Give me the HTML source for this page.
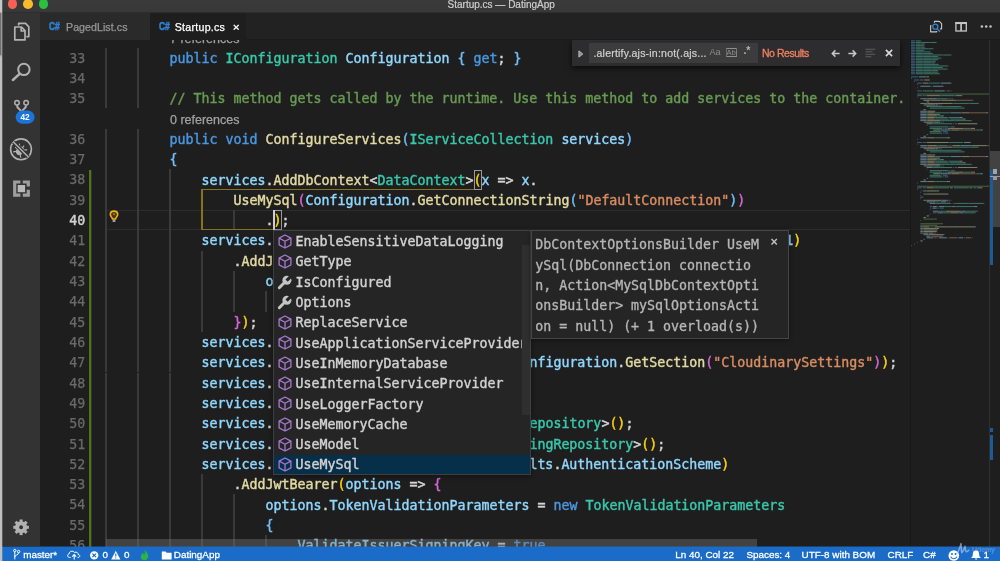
<!DOCTYPE html>
<html lang="en"><head><meta charset="utf-8"><title>Startup.cs — DatingApp</title>
<style>
html,body{margin:0;padding:0;background:#1e1e1e;}
body{width:1000px;height:561px;overflow:hidden;position:relative;font-family:"Liberation Sans","DejaVu Sans",sans-serif;}
*{box-sizing:border-box;}
.abs{position:absolute;}
#root{position:absolute;left:0;top:0;width:1000px;height:561px;overflow:visible;will-change:transform;background:#1e1e1e;filter:blur(0.4px);}
#edge{left:-6px;top:-6px;width:8px;height:573px;background:linear-gradient(#c6c6c6 0,#c6c6c6 18px,#9a9a9a 19px,#9a9a9a 61px,#c0c0c0 63px,#c0c0c0 100%);z-index:5}
#edge2{left:2px;top:-6px;width:1px;height:573px;background:rgba(190,190,190,0.28);z-index:5}
#edge3{left:0;top:13px;width:1px;height:42px;background:#707070;z-index:6}
#title{left:2px;top:-6px;width:1004px;height:19px;background:linear-gradient(#3a3a3a 0,#3a3a3a 6px,#383838 18px,#2d2d2d 18px,#2d2d2d 19px);}
#title .t{position:absolute;left:0;width:1000px;text-align:center;top:5.0px;font-size:10.0px;color:#cfcfcf;letter-spacing:0px;-webkit-text-stroke:0.2px currentColor;white-space:pre;}
.tl{position:absolute;width:9.6px;height:9.6px;border-radius:50%;top:5.4px;}
#act{left:2px;top:13px;width:39px;height:533px;background:linear-gradient(90deg,#333333 0,#333333 38px,#2b2b2b 38px,#2b2b2b 39px);}
#tabs{left:40px;top:13px;width:966px;height:27px;background:linear-gradient(#222223 0,#222223 26px,#1b1b1b 26px,#1b1b1b 27px);}
.tab{position:absolute;top:0;height:26.6px;font-size:10.6px;white-space:pre;}
.tab .ic{position:absolute;top:7.0px;font-size:11.2px;font-weight:bold;color:#2f80d4;letter-spacing:-0.2px;transform:scaleX(0.76);transform-origin:0 0;-webkit-text-stroke:0.55px currentColor;}
.tab .nm{position:absolute;top:8.25px;-webkit-text-stroke:0.25px currentColor;}
#ed{left:40.4px;top:40px;width:966px;height:506.6px;background:#1e1e1e;overflow:hidden;}
.ln,.cl,.num,.lens{position:absolute;white-space:pre;font-family:"DejaVu Sans Mono","Liberation Mono",monospace;font-size:13.29px;line-height:20.3125px;height:20.3125px;}
.cl{color:#d4d4d4;-webkit-text-stroke:0.42px currentColor;}
.num{color:#6a6a6a;-webkit-text-stroke:0.25px currentColor;width:40px;text-align:right;}
.lens{font-family:"Liberation Sans",sans-serif;font-size:12.5px;letter-spacing:0px;color:#a2a2a2;-webkit-text-stroke:0.25px currentColor;}
.k{color:#4a97e0}.t{color:#38c8ad}.c{color:#679b52}.f{color:#e3daa2}.v{color:#90d7fe}.s{color:#d88c62}.p{color:#d6d6d6}
.b1{color:#fdd10c}.b2{color:#d268d6}.b3{color:#72bef8}
.sg{color:#d2d2d2;-webkit-text-stroke:0.4px currentColor}.dt{color:#b6b6b6;-webkit-text-stroke:0.32px currentColor}.ui{white-space:pre;font-family:"Liberation Sans",sans-serif}
.g{position:absolute;width:1.15px;background:#3a3a3a;}
#status{left:2px;top:546px;width:1004px;height:21px;background:linear-gradient(rgba(27,108,200,0.45) 0,rgba(27,108,200,0.45) 1px,#1b6cc8 1px,#1b6cc8 100%);color:#fff;font-size:9.9px;white-space:pre;}
#status span{position:absolute;top:3.3px;line-height:12px;-webkit-text-stroke:0.28px currentColor;}
</style></head><body>
<div id="root">

<div id="edge" class="abs"></div><div id="edge2" class="abs"></div><div id="edge3" class="abs"></div>
<div id="title" class="abs"><div class="tl" style="left:5.7px;background:#f95f57"></div><div class="tl" style="left:21.3px;background:#fbb92e"></div><div class="tl" style="left:36.9px;background:#29c13f"></div><div class="t" style="left:-0.8px">Startup.cs — DatingApp</div></div>
<div id="act" class="abs"><svg class="abs" style="left:0;top:0" width="39" height="534" viewBox="2.0 13.0 39 534"><g fill="none" stroke="#b2b2b2" stroke-width="1.7" stroke-linejoin="round"><path d="M18.6 25.4 L18.6 23.4 L25.6 23.4 L28.8 26.8 L28.8 36.6 L26.4 36.6"/><path d="M14.8 27 L21.6 27 L25 30.6 L25 39.9 L14.8 39.9 Z"/><path d="M21.2 27.2 L21.2 31 L24.8 31"/></g><circle cx="23.9" cy="69.4" r="5.7" fill="none" stroke="#b2b2b2" stroke-width="2"/><path d="M19.6 73.9 L12.9 80" stroke="#b2b2b2" stroke-width="2.5" stroke-linecap="round"/><g fill="none" stroke="#b2b2b2"><circle cx="17" cy="102.8" r="2.25" stroke-width="1.5"/><circle cx="26.1" cy="102.8" r="2.25" stroke-width="1.5"/><path d="M17 105.2 C17 109.2 20.4 108.2 20.7 111.4 M26.1 105.2 C26.1 109.2 22.7 108.2 22.4 111.4" stroke-width="2"/></g><rect x="15.7" y="110.5" width="18.8" height="13.3" rx="6.65" fill="#1a74da"/><text x="25.1" y="120.1" font-family="Liberation Sans, sans-serif" font-size="8.3" font-weight="bold" fill="#fff" text-anchor="middle">42</text><g fill="none" stroke="#b2b2b2" stroke-width="1.6"><circle cx="21" cy="149.3" r="10.4"/></g><g transform="translate(21 149.6) rotate(38)" stroke="#b2b2b2" stroke-width="1.15" fill="none"><ellipse cx="0" cy="1.6" rx="3.1" ry="4" fill="#b2b2b2"/><path d="M0 -2.6 L0 -5 M-2.4 -1.2 L-5 -3.6 M2.4 -1.2 L5 -3.6 M-3 1.6 L-6.2 1.6 M3 1.6 L6.2 1.6 M-2.4 4.2 L-4.8 6.6 M2.4 4.2 L4.8 6.6"/></g><path d="M13.6 142.2 L28.2 156.8" stroke="#333" stroke-width="4"/><path d="M13.4 142 L28.4 157" stroke="#b2b2b2" stroke-width="1.5"/><g fill="none" stroke="#9e9e9e" stroke-width="3.2"><path d="M20.4 182 L14.7 182 L14.7 195.1 L20.4 195.1"/><path d="M22.8 182 L28.3 182 L28.3 186.4"/><path d="M28.3 189.8 L28.3 195.1 L22.8 195.1"/></g><rect x="17.7" y="185" width="7.4" height="7.2" fill="#b9b9b9"/><g transform="translate(21.1 527.3)"><circle r="4.0" fill="none" stroke="#b2b2b2" stroke-width="4.1"/><rect x="-1.5" y="-7.8" width="3" height="3" fill="#b2b2b2" transform="rotate(0)"/><rect x="-1.5" y="-7.8" width="3" height="3" fill="#b2b2b2" transform="rotate(45)"/><rect x="-1.5" y="-7.8" width="3" height="3" fill="#b2b2b2" transform="rotate(90)"/><rect x="-1.5" y="-7.8" width="3" height="3" fill="#b2b2b2" transform="rotate(135)"/><rect x="-1.5" y="-7.8" width="3" height="3" fill="#b2b2b2" transform="rotate(180)"/><rect x="-1.5" y="-7.8" width="3" height="3" fill="#b2b2b2" transform="rotate(225)"/><rect x="-1.5" y="-7.8" width="3" height="3" fill="#b2b2b2" transform="rotate(270)"/><rect x="-1.5" y="-7.8" width="3" height="3" fill="#b2b2b2" transform="rotate(315)"/></g></svg></div>
<div id="tabs" class="abs">
<div class="tab" style="left:0;width:110px;background:#2a2a2a;color:#969696"><span class="ic" style="left:9.0px">C#</span><span class="nm" style="left:26.0px;letter-spacing:0.07px">PagedList.cs</span></div>
<div class="tab" style="left:110px;width:96px;height:27px;background:#1e1e1e;color:#fff"><span class="ic" style="left:8.7px">C#</span><span class="nm" style="left:24.7px;letter-spacing:0.28px">Startup.cs</span><span class="nm" style="left:82.7px;top:7.2px;font-size:11.8px;font-weight:bold;-webkit-text-stroke:0">×</span></div>
<svg class="abs" style="left:0;top:0" width="960" height="27" viewBox="40.0 13.0 960 27"><g fill="none" stroke="#c5c5c5" stroke-width="1.15" stroke-linejoin="round"><path d="M931.4 25.6 L930.6 25.6 L930.6 31.8 L936.6 31.8 L936.6 31"/><path d="M934.4 22.8 L934.4 21.4 L939.4 21.4 L941.6 23.6 L941.6 28.8 L940 28.8"/></g><circle cx="935.3" cy="26.7" r="2.5" fill="none" stroke="#3d82c8" stroke-width="1.3"/><path d="M937.1 28.7 L940 31.8" stroke="#3d82c8" stroke-width="1.4"/><rect x="955.9" y="22.7" width="10.4" height="8.3" fill="none" stroke="#c5c5c5" stroke-width="1.3"/><path d="M955.3 23.1 H966.9" stroke="#c5c5c5" stroke-width="1.9"/><path d="M961.1 22.7 V31" stroke="#c5c5c5" stroke-width="1.7"/><circle cx="981.9" cy="26.4" r="1.25" fill="#c5c5c5"/><circle cx="986.2" cy="26.4" r="1.25" fill="#c5c5c5"/><circle cx="990.5" cy="26.4" r="1.25" fill="#c5c5c5"/></svg>
</div>
<div id="ed" class="abs">
<div class="abs" style="left:65.60px;top:170.10px;width:804.00px;height:20.31px;border-top:1.5px solid #2c2c2c;border-bottom:1.5px solid #2c2c2c"></div>
<div class="abs" style="left:48.60px;top:129.80px;width:3px;height:400px;background:linear-gradient(90deg,#51721f 0,#51721f 2px,#2c3c15 2px,#2c3c15 3px)"></div>
<div class="lens" style="left:129.60px;top:-11.11px">7 references</div>
<div class="g" style="left:65.05px;top:7.50px;height:20.31px"></div>
<div class="g" style="left:97.05px;top:7.50px;height:20.31px"></div>
<div class="num" style="left:4.80px;top:8.60px">33</div>
<div class="cl" style="left:129.15px;top:8.65px"><span class="k">public</span> <span class="t">IConfiguration</span> <span class="v">Configuration</span> <span class="b3">{</span> <span class="k">get</span><span class="p">;</span> <span class="b3">}</span></div>
<div class="g" style="left:65.05px;top:27.81px;height:20.31px"></div>
<div class="g" style="left:97.05px;top:27.81px;height:20.31px"></div>
<div class="num" style="left:4.80px;top:28.91px">34</div>
<div class="g" style="left:65.05px;top:48.12px;height:20.31px"></div>
<div class="g" style="left:97.05px;top:48.12px;height:20.31px"></div>
<div class="num" style="left:4.80px;top:49.22px">35</div>
<div class="cl" style="left:129.15px;top:49.28px"><span class="c">// This method gets called by the runtime. Use this method to add services to the container.</span></div>
<div class="lens" style="left:129.60px;top:70.14px">0 references</div>
<div class="g" style="left:65.05px;top:88.75px;height:20.31px"></div>
<div class="g" style="left:97.05px;top:88.75px;height:20.31px"></div>
<div class="num" style="left:4.80px;top:89.85px">36</div>
<div class="cl" style="left:129.15px;top:89.90px"><span class="k">public</span> <span class="k">void</span> <span class="f">ConfigureServices</span><span class="b3">(</span><span class="t">IServiceCollection</span> <span class="v">services</span><span class="b3">)</span></div>
<div class="g" style="left:65.05px;top:109.06px;height:20.31px"></div>
<div class="g" style="left:97.05px;top:109.06px;height:20.31px"></div>
<div class="num" style="left:4.80px;top:110.16px">37</div>
<div class="cl" style="left:129.15px;top:110.21px"><span class="b3">{</span></div>
<div class="g" style="left:65.05px;top:129.38px;height:20.31px"></div>
<div class="g" style="left:97.05px;top:129.38px;height:20.31px"></div>
<div class="g" style="left:129.05px;top:129.38px;height:20.31px"></div>
<div class="num" style="left:4.80px;top:130.47px">38</div>
<div class="cl" style="left:161.15px;top:130.53px"><span class="v">services</span><span class="p">.</span><span class="f">AddDbContext</span><span class="p">&lt;</span><span class="t">DataContext</span><span class="p">&gt;</span><span class="b1">(</span><span class="v">x</span><span class="p"> =&gt; </span><span class="v">x</span><span class="p">.</span></div>
<div class="g" style="left:65.05px;top:149.69px;height:20.31px"></div>
<div class="g" style="left:97.05px;top:149.69px;height:20.31px"></div>
<div class="g" style="left:129.05px;top:149.69px;height:20.31px"></div>
<div class="g" style="left:161.05px;top:149.69px;height:20.31px"></div>
<div class="num" style="left:4.80px;top:150.79px">39</div>
<div class="cl" style="left:193.15px;top:150.84px"><span class="f">UseMySql</span><span class="b2">(</span><span class="v">Configuration</span><span class="p">.</span><span class="f">GetConnectionString</span><span class="b3">(</span><span class="s">"DefaultConnection"</span><span class="b3">)</span><span class="b2">)</span></div>
<div class="g" style="left:65.05px;top:170.00px;height:20.31px"></div>
<div class="g" style="left:97.05px;top:170.00px;height:20.31px"></div>
<div class="g" style="left:129.05px;top:170.00px;height:20.31px"></div>
<div class="g" style="left:161.05px;top:170.00px;height:20.31px"></div>
<div class="g" style="left:193.05px;top:170.00px;height:20.31px"></div>
<div class="num" style="left:4.80px;top:171.10px;color:#cfcfcf;-webkit-text-stroke:0.45px currentColor">40</div>
<div class="cl" style="left:225.15px;top:171.15px"><span class="p">.</span><span class="b1">)</span><span class="p">;</span></div>
<div class="g" style="left:65.05px;top:190.31px;height:20.31px"></div>
<div class="g" style="left:97.05px;top:190.31px;height:20.31px"></div>
<div class="g" style="left:129.05px;top:190.31px;height:20.31px"></div>
<div class="num" style="left:4.80px;top:191.41px">41</div>
<div class="cl" style="left:161.15px;top:191.46px"><span class="v">services</span><span class="p">.</span><span class="f">AddMvc</span><span class="b1">()</span><span class="p">.</span><span class="f">SetCompatibilityVersion</span><span class="b1">(</span><span class="t">CompatibilityVersion</span><span class="p">.</span><span class="v">Version_2_1</span><span class="b1">)</span></div>
<div class="g" style="left:65.05px;top:210.62px;height:20.31px"></div>
<div class="g" style="left:97.05px;top:210.62px;height:20.31px"></div>
<div class="g" style="left:129.05px;top:210.62px;height:20.31px"></div>
<div class="g" style="left:161.05px;top:210.62px;height:20.31px"></div>
<div class="num" style="left:4.80px;top:211.72px">42</div>
<div class="cl" style="left:193.15px;top:211.78px"><span class="p">.</span><span class="f">AddJsonOptions</span><span class="b1">(</span><span class="v">opt</span><span class="p"> =&gt; </span><span class="b2">{</span></div>
<div class="g" style="left:65.05px;top:230.94px;height:20.31px"></div>
<div class="g" style="left:97.05px;top:230.94px;height:20.31px"></div>
<div class="g" style="left:129.05px;top:230.94px;height:20.31px"></div>
<div class="g" style="left:161.05px;top:230.94px;height:20.31px"></div>
<div class="g" style="left:193.05px;top:230.94px;height:20.31px"></div>
<div class="num" style="left:4.80px;top:232.04px">43</div>
<div class="cl" style="left:225.15px;top:232.09px"><span class="v">opt</span><span class="p">.</span><span class="v">SerializerSettings</span><span class="p">.</span><span class="v">ReferenceLoopHandling</span><span class="p"> =</span></div>
<div class="g" style="left:65.05px;top:251.25px;height:20.31px"></div>
<div class="g" style="left:97.05px;top:251.25px;height:20.31px"></div>
<div class="g" style="left:129.05px;top:251.25px;height:20.31px"></div>
<div class="g" style="left:161.05px;top:251.25px;height:20.31px"></div>
<div class="g" style="left:193.05px;top:251.25px;height:20.31px"></div>
<div class="g" style="left:225.05px;top:251.25px;height:20.31px"></div>
<div class="num" style="left:4.80px;top:252.35px">44</div>
<div class="cl" style="left:257.15px;top:252.40px"><span class="v">Newtonsoft</span><span class="p">.</span><span class="v">Json</span><span class="p">.</span><span class="t">ReferenceLoopHandling</span><span class="p">.</span><span class="v">Ignore</span><span class="p">;</span></div>
<div class="g" style="left:65.05px;top:271.56px;height:20.31px"></div>
<div class="g" style="left:97.05px;top:271.56px;height:20.31px"></div>
<div class="g" style="left:129.05px;top:271.56px;height:20.31px"></div>
<div class="g" style="left:161.05px;top:271.56px;height:20.31px"></div>
<div class="num" style="left:4.80px;top:272.66px">45</div>
<div class="cl" style="left:193.15px;top:272.71px"><span class="b2">}</span><span class="b1">)</span><span class="p">;</span></div>
<div class="g" style="left:65.05px;top:291.88px;height:20.31px"></div>
<div class="g" style="left:97.05px;top:291.88px;height:20.31px"></div>
<div class="g" style="left:129.05px;top:291.88px;height:20.31px"></div>
<div class="num" style="left:4.80px;top:292.98px">46</div>
<div class="cl" style="left:161.15px;top:293.02px"><span class="v">services</span><span class="p">.</span><span class="f">AddCors</span><span class="b1">()</span><span class="p">;</span></div>
<div class="g" style="left:65.05px;top:312.19px;height:20.31px"></div>
<div class="g" style="left:97.05px;top:312.19px;height:20.31px"></div>
<div class="g" style="left:129.05px;top:312.19px;height:20.31px"></div>
<div class="num" style="left:4.80px;top:313.29px">47</div>
<div class="cl" style="left:161.15px;top:313.34px"><span class="v">services</span><span class="p">.</span><span class="f">Configure</span><span class="p">&lt;</span><span class="t">CloudinarySettings</span><span class="p">&gt;</span><span class="b1">(</span><span class="v">Configuration</span><span class="p">.</span><span class="f">GetSection</span><span class="b2">(</span><span class="s">"CloudinarySettings"</span><span class="b2">)</span><span class="b1">)</span><span class="p">;</span></div>
<div class="g" style="left:65.05px;top:332.50px;height:20.31px"></div>
<div class="g" style="left:97.05px;top:332.50px;height:20.31px"></div>
<div class="g" style="left:129.05px;top:332.50px;height:20.31px"></div>
<div class="num" style="left:4.80px;top:333.60px">48</div>
<div class="cl" style="left:161.15px;top:333.65px"><span class="v">services</span><span class="p">.</span><span class="f">AddAutoMapper</span><span class="b1">()</span><span class="p">;</span></div>
<div class="g" style="left:65.05px;top:352.81px;height:20.31px"></div>
<div class="g" style="left:97.05px;top:352.81px;height:20.31px"></div>
<div class="g" style="left:129.05px;top:352.81px;height:20.31px"></div>
<div class="num" style="left:4.80px;top:353.91px">49</div>
<div class="cl" style="left:161.15px;top:353.96px"><span class="v">services</span><span class="p">.</span><span class="f">AddTransient</span><span class="p">&lt;</span><span class="t">Seed</span><span class="p">&gt;</span><span class="b1">()</span><span class="p">;</span></div>
<div class="g" style="left:65.05px;top:373.12px;height:20.31px"></div>
<div class="g" style="left:97.05px;top:373.12px;height:20.31px"></div>
<div class="g" style="left:129.05px;top:373.12px;height:20.31px"></div>
<div class="num" style="left:4.80px;top:374.23px">50</div>
<div class="cl" style="left:161.15px;top:374.27px"><span class="v">services</span><span class="p">.</span><span class="f">AddScoped</span><span class="p">&lt;</span><span class="t">IAuthRepository</span><span class="p">, </span><span class="t">AuthRepository</span><span class="p">&gt;</span><span class="b1">()</span><span class="p">;</span></div>
<div class="g" style="left:65.05px;top:393.44px;height:20.31px"></div>
<div class="g" style="left:97.05px;top:393.44px;height:20.31px"></div>
<div class="g" style="left:129.05px;top:393.44px;height:20.31px"></div>
<div class="num" style="left:4.80px;top:394.54px">51</div>
<div class="cl" style="left:161.15px;top:394.59px"><span class="v">services</span><span class="p">.</span><span class="f">AddScoped</span><span class="p">&lt;</span><span class="t">IDatingRepository</span><span class="p">, </span><span class="t">DatingRepository</span><span class="p">&gt;</span><span class="b1">()</span><span class="p">;</span></div>
<div class="g" style="left:65.05px;top:413.75px;height:20.31px"></div>
<div class="g" style="left:97.05px;top:413.75px;height:20.31px"></div>
<div class="g" style="left:129.05px;top:413.75px;height:20.31px"></div>
<div class="num" style="left:4.80px;top:414.85px">52</div>
<div class="cl" style="left:161.15px;top:414.90px"><span class="v">services</span><span class="p">.</span><span class="f">AddAuthentication</span><span class="b1">(</span><span class="v">JwtBearerDefaults</span><span class="p">.</span><span class="v">AuthenticationScheme</span><span class="b1">)</span></div>
<div class="g" style="left:65.05px;top:434.06px;height:20.31px"></div>
<div class="g" style="left:97.05px;top:434.06px;height:20.31px"></div>
<div class="g" style="left:129.05px;top:434.06px;height:20.31px"></div>
<div class="g" style="left:161.05px;top:434.06px;height:20.31px"></div>
<div class="num" style="left:4.80px;top:435.16px">53</div>
<div class="cl" style="left:193.15px;top:435.21px"><span class="p">.</span><span class="f">AddJwtBearer</span><span class="b1">(</span><span class="v">options</span><span class="p"> =&gt; </span><span class="b2">{</span></div>
<div class="g" style="left:65.05px;top:454.38px;height:20.31px"></div>
<div class="g" style="left:97.05px;top:454.38px;height:20.31px"></div>
<div class="g" style="left:129.05px;top:454.38px;height:20.31px"></div>
<div class="g" style="left:161.05px;top:454.38px;height:20.31px"></div>
<div class="g" style="left:193.05px;top:454.38px;height:20.31px"></div>
<div class="num" style="left:4.80px;top:455.48px">54</div>
<div class="cl" style="left:225.15px;top:455.52px"><span class="v">options</span><span class="p">.</span><span class="v">TokenValidationParameters</span><span class="p"> = </span><span class="k">new</span> <span class="t">TokenValidationParameters</span></div>
<div class="g" style="left:65.05px;top:474.69px;height:20.31px"></div>
<div class="g" style="left:97.05px;top:474.69px;height:20.31px"></div>
<div class="g" style="left:129.05px;top:474.69px;height:20.31px"></div>
<div class="g" style="left:161.05px;top:474.69px;height:20.31px"></div>
<div class="g" style="left:193.05px;top:474.69px;height:20.31px"></div>
<div class="num" style="left:4.80px;top:475.79px">55</div>
<div class="cl" style="left:225.15px;top:475.84px"><span class="b3">{</span></div>
<div class="g" style="left:65.05px;top:495.00px;height:20.31px"></div>
<div class="g" style="left:97.05px;top:495.00px;height:20.31px"></div>
<div class="g" style="left:129.05px;top:495.00px;height:20.31px"></div>
<div class="g" style="left:161.05px;top:495.00px;height:20.31px"></div>
<div class="g" style="left:193.05px;top:495.00px;height:20.31px"></div>
<div class="g" style="left:225.05px;top:495.00px;height:20.31px"></div>
<div class="num" style="left:4.80px;top:496.10px">56</div>
<div class="cl" style="left:257.15px;top:496.15px"><span class="v">ValidateIssuerSigningKey</span><span class="p"> = </span><span class="k">true</span><span class="p">,</span></div>
<svg class="abs" style="left:870.20px;top:0" width="78.60" height="340" viewBox="0 0 78.60 340" shape-rendering="auto"><rect x="0.00" y="0.40" width="3.90" height="1.05" fill="#569cd6" opacity="0.50"/><rect x="4.68" y="0.40" width="4.68" height="1.05" fill="#4ec9b0" opacity="0.50"/><rect x="9.36" y="0.40" width="0.78" height="1.05" fill="#d4d4d4" opacity="0.30"/><rect x="0.00" y="1.96" width="3.90" height="1.05" fill="#569cd6" opacity="0.50"/><rect x="4.68" y="1.96" width="4.68" height="1.05" fill="#4ec9b0" opacity="0.50"/><rect x="9.36" y="1.96" width="0.78" height="1.05" fill="#d4d4d4" opacity="0.30"/><rect x="10.14" y="1.96" width="8.58" height="1.05" fill="#4ec9b0" opacity="0.50"/><rect x="18.72" y="1.96" width="0.78" height="1.05" fill="#d4d4d4" opacity="0.30"/><rect x="19.50" y="1.96" width="5.46" height="1.05" fill="#4ec9b0" opacity="0.50"/><rect x="24.96" y="1.96" width="0.78" height="1.05" fill="#d4d4d4" opacity="0.30"/><rect x="0.00" y="3.52" width="3.90" height="1.05" fill="#569cd6" opacity="0.50"/><rect x="4.68" y="3.52" width="4.68" height="1.05" fill="#4ec9b0" opacity="0.50"/><rect x="9.36" y="3.52" width="0.78" height="1.05" fill="#d4d4d4" opacity="0.30"/><rect x="10.14" y="3.52" width="3.12" height="1.05" fill="#4ec9b0" opacity="0.50"/><rect x="13.26" y="3.52" width="0.78" height="1.05" fill="#d4d4d4" opacity="0.30"/><rect x="0.00" y="5.09" width="3.90" height="1.05" fill="#569cd6" opacity="0.50"/><rect x="4.68" y="5.09" width="4.68" height="1.05" fill="#4ec9b0" opacity="0.50"/><rect x="9.36" y="5.09" width="0.78" height="1.05" fill="#d4d4d4" opacity="0.30"/><rect x="10.14" y="5.09" width="2.34" height="1.05" fill="#4ec9b0" opacity="0.50"/><rect x="12.48" y="5.09" width="0.78" height="1.05" fill="#d4d4d4" opacity="0.30"/><rect x="0.00" y="6.65" width="3.90" height="1.05" fill="#569cd6" opacity="0.50"/><rect x="4.68" y="6.65" width="4.68" height="1.05" fill="#4ec9b0" opacity="0.50"/><rect x="9.36" y="6.65" width="0.78" height="1.05" fill="#d4d4d4" opacity="0.30"/><rect x="10.14" y="6.65" width="3.12" height="1.05" fill="#4ec9b0" opacity="0.50"/><rect x="13.26" y="6.65" width="0.78" height="1.05" fill="#d4d4d4" opacity="0.30"/><rect x="0.00" y="8.21" width="3.90" height="1.05" fill="#569cd6" opacity="0.50"/><rect x="4.68" y="8.21" width="4.68" height="1.05" fill="#4ec9b0" opacity="0.50"/><rect x="9.36" y="8.21" width="0.78" height="1.05" fill="#d4d4d4" opacity="0.30"/><rect x="10.14" y="8.21" width="7.02" height="1.05" fill="#4ec9b0" opacity="0.50"/><rect x="17.16" y="8.21" width="0.78" height="1.05" fill="#d4d4d4" opacity="0.30"/><rect x="17.94" y="8.21" width="3.90" height="1.05" fill="#4ec9b0" opacity="0.50"/><rect x="21.84" y="8.21" width="0.78" height="1.05" fill="#d4d4d4" opacity="0.30"/><rect x="0.00" y="9.77" width="3.90" height="1.05" fill="#569cd6" opacity="0.50"/><rect x="4.68" y="9.77" width="7.80" height="1.05" fill="#4ec9b0" opacity="0.50"/><rect x="12.48" y="9.77" width="0.78" height="1.05" fill="#d4d4d4" opacity="0.30"/><rect x="0.00" y="11.34" width="3.90" height="1.05" fill="#569cd6" opacity="0.50"/><rect x="4.68" y="11.34" width="7.02" height="1.05" fill="#4ec9b0" opacity="0.50"/><rect x="11.70" y="11.34" width="0.78" height="1.05" fill="#d4d4d4" opacity="0.30"/><rect x="12.48" y="11.34" width="2.34" height="1.05" fill="#4ec9b0" opacity="0.50"/><rect x="14.82" y="11.34" width="0.78" height="1.05" fill="#d4d4d4" opacity="0.30"/><rect x="15.60" y="11.34" width="3.12" height="1.05" fill="#4ec9b0" opacity="0.50"/><rect x="18.72" y="11.34" width="0.78" height="1.05" fill="#d4d4d4" opacity="0.30"/><rect x="0.00" y="12.90" width="3.90" height="1.05" fill="#569cd6" opacity="0.50"/><rect x="4.68" y="12.90" width="7.02" height="1.05" fill="#4ec9b0" opacity="0.50"/><rect x="11.70" y="12.90" width="0.78" height="1.05" fill="#d4d4d4" opacity="0.30"/><rect x="12.48" y="12.90" width="2.34" height="1.05" fill="#4ec9b0" opacity="0.50"/><rect x="14.82" y="12.90" width="0.78" height="1.05" fill="#d4d4d4" opacity="0.30"/><rect x="15.60" y="12.90" width="5.46" height="1.05" fill="#4ec9b0" opacity="0.50"/><rect x="21.06" y="12.90" width="0.78" height="1.05" fill="#d4d4d4" opacity="0.30"/><rect x="0.00" y="14.46" width="3.90" height="1.05" fill="#569cd6" opacity="0.50"/><rect x="4.68" y="14.46" width="7.02" height="1.05" fill="#4ec9b0" opacity="0.50"/><rect x="11.70" y="14.46" width="0.78" height="1.05" fill="#d4d4d4" opacity="0.30"/><rect x="12.48" y="14.46" width="7.80" height="1.05" fill="#4ec9b0" opacity="0.50"/><rect x="20.28" y="14.46" width="0.78" height="1.05" fill="#d4d4d4" opacity="0.30"/><rect x="21.06" y="14.46" width="10.92" height="1.05" fill="#4ec9b0" opacity="0.50"/><rect x="31.98" y="14.46" width="0.78" height="1.05" fill="#d4d4d4" opacity="0.30"/><rect x="32.76" y="14.46" width="7.02" height="1.05" fill="#4ec9b0" opacity="0.50"/><rect x="39.78" y="14.46" width="0.78" height="1.05" fill="#d4d4d4" opacity="0.30"/><rect x="0.00" y="16.02" width="3.90" height="1.05" fill="#569cd6" opacity="0.50"/><rect x="4.68" y="16.02" width="7.02" height="1.05" fill="#4ec9b0" opacity="0.50"/><rect x="11.70" y="16.02" width="0.78" height="1.05" fill="#d4d4d4" opacity="0.30"/><rect x="12.48" y="16.02" width="7.80" height="1.05" fill="#4ec9b0" opacity="0.50"/><rect x="20.28" y="16.02" width="0.78" height="1.05" fill="#d4d4d4" opacity="0.30"/><rect x="21.06" y="16.02" width="5.46" height="1.05" fill="#4ec9b0" opacity="0.50"/><rect x="26.52" y="16.02" width="0.78" height="1.05" fill="#d4d4d4" opacity="0.30"/><rect x="0.00" y="17.59" width="3.90" height="1.05" fill="#569cd6" opacity="0.50"/><rect x="4.68" y="17.59" width="7.02" height="1.05" fill="#4ec9b0" opacity="0.50"/><rect x="11.70" y="17.59" width="0.78" height="1.05" fill="#d4d4d4" opacity="0.30"/><rect x="12.48" y="17.59" width="7.80" height="1.05" fill="#4ec9b0" opacity="0.50"/><rect x="20.28" y="17.59" width="0.78" height="1.05" fill="#d4d4d4" opacity="0.30"/><rect x="21.06" y="17.59" width="8.58" height="1.05" fill="#4ec9b0" opacity="0.50"/><rect x="29.64" y="17.59" width="0.78" height="1.05" fill="#d4d4d4" opacity="0.30"/><rect x="0.00" y="19.15" width="3.90" height="1.05" fill="#569cd6" opacity="0.50"/><rect x="4.68" y="19.15" width="7.02" height="1.05" fill="#4ec9b0" opacity="0.50"/><rect x="11.70" y="19.15" width="0.78" height="1.05" fill="#d4d4d4" opacity="0.30"/><rect x="12.48" y="19.15" width="7.80" height="1.05" fill="#4ec9b0" opacity="0.50"/><rect x="20.28" y="19.15" width="0.78" height="1.05" fill="#d4d4d4" opacity="0.30"/><rect x="21.06" y="19.15" width="5.46" height="1.05" fill="#4ec9b0" opacity="0.50"/><rect x="26.52" y="19.15" width="0.78" height="1.05" fill="#d4d4d4" opacity="0.30"/><rect x="0.00" y="20.71" width="3.90" height="1.05" fill="#569cd6" opacity="0.50"/><rect x="4.68" y="20.71" width="7.02" height="1.05" fill="#4ec9b0" opacity="0.50"/><rect x="11.70" y="20.71" width="0.78" height="1.05" fill="#d4d4d4" opacity="0.30"/><rect x="12.48" y="20.71" width="7.80" height="1.05" fill="#4ec9b0" opacity="0.50"/><rect x="20.28" y="20.71" width="0.78" height="1.05" fill="#d4d4d4" opacity="0.30"/><rect x="21.06" y="20.71" width="3.12" height="1.05" fill="#4ec9b0" opacity="0.50"/><rect x="24.18" y="20.71" width="0.78" height="1.05" fill="#d4d4d4" opacity="0.30"/><rect x="0.00" y="22.27" width="3.90" height="1.05" fill="#569cd6" opacity="0.50"/><rect x="4.68" y="22.27" width="7.02" height="1.05" fill="#4ec9b0" opacity="0.50"/><rect x="11.70" y="22.27" width="0.78" height="1.05" fill="#d4d4d4" opacity="0.30"/><rect x="12.48" y="22.27" width="7.80" height="1.05" fill="#4ec9b0" opacity="0.50"/><rect x="20.28" y="22.27" width="0.78" height="1.05" fill="#d4d4d4" opacity="0.30"/><rect x="21.06" y="22.27" width="2.34" height="1.05" fill="#4ec9b0" opacity="0.50"/><rect x="23.40" y="22.27" width="0.78" height="1.05" fill="#d4d4d4" opacity="0.30"/><rect x="0.00" y="23.84" width="3.90" height="1.05" fill="#569cd6" opacity="0.50"/><rect x="4.68" y="23.84" width="7.02" height="1.05" fill="#4ec9b0" opacity="0.50"/><rect x="11.70" y="23.84" width="0.78" height="1.05" fill="#d4d4d4" opacity="0.30"/><rect x="12.48" y="23.84" width="14.82" height="1.05" fill="#4ec9b0" opacity="0.50"/><rect x="27.30" y="23.84" width="0.78" height="1.05" fill="#d4d4d4" opacity="0.30"/><rect x="0.00" y="25.40" width="3.90" height="1.05" fill="#569cd6" opacity="0.50"/><rect x="4.68" y="25.40" width="7.02" height="1.05" fill="#4ec9b0" opacity="0.50"/><rect x="11.70" y="25.40" width="0.78" height="1.05" fill="#d4d4d4" opacity="0.30"/><rect x="12.48" y="25.40" width="14.82" height="1.05" fill="#4ec9b0" opacity="0.50"/><rect x="27.30" y="25.40" width="0.78" height="1.05" fill="#d4d4d4" opacity="0.30"/><rect x="28.08" y="25.40" width="8.58" height="1.05" fill="#4ec9b0" opacity="0.50"/><rect x="36.66" y="25.40" width="0.78" height="1.05" fill="#d4d4d4" opacity="0.30"/><rect x="0.00" y="26.96" width="3.90" height="1.05" fill="#569cd6" opacity="0.50"/><rect x="4.68" y="26.96" width="7.02" height="1.05" fill="#4ec9b0" opacity="0.50"/><rect x="11.70" y="26.96" width="0.78" height="1.05" fill="#d4d4d4" opacity="0.30"/><rect x="12.48" y="26.96" width="7.80" height="1.05" fill="#4ec9b0" opacity="0.50"/><rect x="20.28" y="26.96" width="0.78" height="1.05" fill="#d4d4d4" opacity="0.30"/><rect x="21.06" y="26.96" width="10.14" height="1.05" fill="#4ec9b0" opacity="0.50"/><rect x="31.20" y="26.96" width="0.78" height="1.05" fill="#d4d4d4" opacity="0.30"/><rect x="0.00" y="28.52" width="3.90" height="1.05" fill="#569cd6" opacity="0.50"/><rect x="4.68" y="28.52" width="7.02" height="1.05" fill="#4ec9b0" opacity="0.50"/><rect x="11.70" y="28.52" width="0.78" height="1.05" fill="#d4d4d4" opacity="0.30"/><rect x="12.48" y="28.52" width="7.80" height="1.05" fill="#4ec9b0" opacity="0.50"/><rect x="20.28" y="28.52" width="0.78" height="1.05" fill="#d4d4d4" opacity="0.30"/><rect x="21.06" y="28.52" width="14.82" height="1.05" fill="#4ec9b0" opacity="0.50"/><rect x="35.88" y="28.52" width="0.78" height="1.05" fill="#d4d4d4" opacity="0.30"/><rect x="0.00" y="30.09" width="3.90" height="1.05" fill="#569cd6" opacity="0.50"/><rect x="4.68" y="30.09" width="7.02" height="1.05" fill="#4ec9b0" opacity="0.50"/><rect x="11.70" y="30.09" width="0.78" height="1.05" fill="#d4d4d4" opacity="0.30"/><rect x="12.48" y="30.09" width="7.80" height="1.05" fill="#4ec9b0" opacity="0.50"/><rect x="20.28" y="30.09" width="0.78" height="1.05" fill="#d4d4d4" opacity="0.30"/><rect x="21.06" y="30.09" width="5.46" height="1.05" fill="#4ec9b0" opacity="0.50"/><rect x="26.52" y="30.09" width="0.78" height="1.05" fill="#d4d4d4" opacity="0.30"/><rect x="0.00" y="31.65" width="3.90" height="1.05" fill="#569cd6" opacity="0.50"/><rect x="4.68" y="31.65" width="7.02" height="1.05" fill="#4ec9b0" opacity="0.50"/><rect x="11.70" y="31.65" width="0.78" height="1.05" fill="#d4d4d4" opacity="0.30"/><rect x="12.48" y="31.65" width="7.80" height="1.05" fill="#4ec9b0" opacity="0.50"/><rect x="20.28" y="31.65" width="0.78" height="1.05" fill="#d4d4d4" opacity="0.30"/><rect x="21.06" y="31.65" width="5.46" height="1.05" fill="#4ec9b0" opacity="0.50"/><rect x="26.52" y="31.65" width="0.78" height="1.05" fill="#d4d4d4" opacity="0.30"/><rect x="0.00" y="33.21" width="3.90" height="1.05" fill="#569cd6" opacity="0.50"/><rect x="4.68" y="33.21" width="7.02" height="1.05" fill="#4ec9b0" opacity="0.50"/><rect x="11.70" y="33.21" width="0.78" height="1.05" fill="#d4d4d4" opacity="0.30"/><rect x="12.48" y="33.21" width="10.14" height="1.05" fill="#4ec9b0" opacity="0.50"/><rect x="22.62" y="33.21" width="0.78" height="1.05" fill="#d4d4d4" opacity="0.30"/><rect x="23.40" y="33.21" width="4.68" height="1.05" fill="#4ec9b0" opacity="0.50"/><rect x="28.08" y="33.21" width="0.78" height="1.05" fill="#d4d4d4" opacity="0.30"/><rect x="0.00" y="36.34" width="7.02" height="1.05" fill="#569cd6" opacity="0.50"/><rect x="7.80" y="36.34" width="7.02" height="1.05" fill="#9cdcfe" opacity="0.50"/><rect x="14.82" y="36.34" width="0.78" height="1.05" fill="#d4d4d4" opacity="0.30"/><rect x="15.60" y="36.34" width="2.34" height="1.05" fill="#dcdcaa" opacity="0.50"/><rect x="0.00" y="37.90" width="0.78" height="1.05" fill="#d4d4d4" opacity="0.30"/><rect x="3.12" y="39.46" width="4.68" height="1.05" fill="#569cd6" opacity="0.50"/><rect x="8.58" y="39.46" width="3.90" height="1.05" fill="#569cd6" opacity="0.50"/><rect x="13.26" y="39.46" width="5.46" height="1.05" fill="#dcdcaa" opacity="0.50"/><rect x="3.12" y="41.02" width="0.78" height="1.05" fill="#d4d4d4" opacity="0.30"/><rect x="6.24" y="42.59" width="4.68" height="1.05" fill="#569cd6" opacity="0.50"/><rect x="11.70" y="42.59" width="5.46" height="1.05" fill="#dcdcaa" opacity="0.50"/><rect x="17.16" y="42.59" width="0.78" height="1.05" fill="#d4d4d4" opacity="0.30"/><rect x="17.94" y="42.59" width="10.92" height="1.05" fill="#4ec9b0" opacity="0.50"/><rect x="29.64" y="42.59" width="10.14" height="1.05" fill="#9cdcfe" opacity="0.50"/><rect x="39.78" y="42.59" width="0.78" height="1.05" fill="#d4d4d4" opacity="0.30"/><rect x="6.24" y="44.15" width="0.78" height="1.05" fill="#d4d4d4" opacity="0.30"/><rect x="9.36" y="45.71" width="10.14" height="1.05" fill="#9cdcfe" opacity="0.50"/><rect x="20.28" y="45.71" width="0.78" height="1.05" fill="#d4d4d4" opacity="0.30"/><rect x="21.84" y="45.71" width="10.14" height="1.05" fill="#9cdcfe" opacity="0.50"/><rect x="31.98" y="45.71" width="0.78" height="1.05" fill="#d4d4d4" opacity="0.30"/><rect x="6.24" y="47.27" width="0.78" height="1.05" fill="#d4d4d4" opacity="0.30"/><rect x="6.24" y="50.40" width="4.68" height="1.05" fill="#569cd6" opacity="0.50"/><rect x="11.70" y="50.40" width="10.92" height="1.05" fill="#4ec9b0" opacity="0.50"/><rect x="23.40" y="50.40" width="10.14" height="1.05" fill="#9cdcfe" opacity="0.50"/><rect x="34.32" y="50.40" width="0.78" height="1.05" fill="#d4d4d4" opacity="0.30"/><rect x="35.88" y="50.40" width="2.34" height="1.05" fill="#569cd6" opacity="0.50"/><rect x="38.22" y="50.40" width="0.78" height="1.05" fill="#d4d4d4" opacity="0.30"/><rect x="39.78" y="50.40" width="0.78" height="1.05" fill="#d4d4d4" opacity="0.30"/><rect x="6.24" y="53.52" width="71.76" height="1.05" fill="#6a9955" opacity="0.55"/><rect x="6.24" y="55.09" width="4.68" height="1.05" fill="#569cd6" opacity="0.50"/><rect x="11.70" y="55.09" width="3.12" height="1.05" fill="#569cd6" opacity="0.50"/><rect x="15.60" y="55.09" width="13.26" height="1.05" fill="#dcdcaa" opacity="0.50"/><rect x="28.86" y="55.09" width="0.78" height="1.05" fill="#d4d4d4" opacity="0.30"/><rect x="29.64" y="55.09" width="14.04" height="1.05" fill="#4ec9b0" opacity="0.50"/><rect x="44.46" y="55.09" width="6.24" height="1.05" fill="#9cdcfe" opacity="0.50"/><rect x="50.70" y="55.09" width="0.78" height="1.05" fill="#d4d4d4" opacity="0.30"/><rect x="6.24" y="56.65" width="0.78" height="1.05" fill="#d4d4d4" opacity="0.30"/><rect x="9.36" y="58.21" width="6.24" height="1.05" fill="#9cdcfe" opacity="0.50"/><rect x="15.60" y="58.21" width="0.78" height="1.05" fill="#d4d4d4" opacity="0.30"/><rect x="16.38" y="58.21" width="9.36" height="1.05" fill="#dcdcaa" opacity="0.50"/><rect x="25.74" y="58.21" width="0.78" height="1.05" fill="#d4d4d4" opacity="0.30"/><rect x="26.52" y="58.21" width="8.58" height="1.05" fill="#4ec9b0" opacity="0.50"/><rect x="35.10" y="58.21" width="1.56" height="1.05" fill="#d4d4d4" opacity="0.30"/><rect x="36.66" y="58.21" width="0.78" height="1.05" fill="#9cdcfe" opacity="0.30"/><rect x="38.22" y="58.21" width="1.56" height="1.05" fill="#d4d4d4" opacity="0.30"/><rect x="40.56" y="58.21" width="0.78" height="1.05" fill="#9cdcfe" opacity="0.30"/><rect x="41.34" y="58.21" width="0.78" height="1.05" fill="#d4d4d4" opacity="0.30"/><rect x="12.48" y="59.77" width="6.24" height="1.05" fill="#dcdcaa" opacity="0.50"/><rect x="18.72" y="59.77" width="0.78" height="1.05" fill="#d4d4d4" opacity="0.30"/><rect x="19.50" y="59.77" width="10.14" height="1.05" fill="#9cdcfe" opacity="0.50"/><rect x="29.64" y="59.77" width="0.78" height="1.05" fill="#d4d4d4" opacity="0.30"/><rect x="30.42" y="59.77" width="14.82" height="1.05" fill="#dcdcaa" opacity="0.50"/><rect x="45.24" y="59.77" width="0.78" height="1.05" fill="#d4d4d4" opacity="0.30"/><rect x="46.02" y="59.77" width="14.82" height="1.05" fill="#ce9178" opacity="0.50"/><rect x="60.84" y="59.77" width="1.56" height="1.05" fill="#d4d4d4" opacity="0.30"/><rect x="15.60" y="61.34" width="2.34" height="1.05" fill="#d4d4d4" opacity="0.50"/><rect x="9.36" y="62.90" width="6.24" height="1.05" fill="#9cdcfe" opacity="0.50"/><rect x="15.60" y="62.90" width="0.78" height="1.05" fill="#d4d4d4" opacity="0.30"/><rect x="16.38" y="62.90" width="4.68" height="1.05" fill="#dcdcaa" opacity="0.50"/><rect x="21.06" y="62.90" width="2.34" height="1.05" fill="#d4d4d4" opacity="0.50"/><rect x="23.40" y="62.90" width="17.94" height="1.05" fill="#dcdcaa" opacity="0.50"/><rect x="41.34" y="62.90" width="0.78" height="1.05" fill="#d4d4d4" opacity="0.30"/><rect x="42.12" y="62.90" width="15.60" height="1.05" fill="#4ec9b0" opacity="0.50"/><rect x="57.72" y="62.90" width="0.78" height="1.05" fill="#d4d4d4" opacity="0.30"/><rect x="58.50" y="62.90" width="8.58" height="1.05" fill="#4ec9b0" opacity="0.50"/><rect x="67.08" y="62.90" width="0.78" height="1.05" fill="#d4d4d4" opacity="0.30"/><rect x="12.48" y="64.46" width="0.78" height="1.05" fill="#d4d4d4" opacity="0.30"/><rect x="13.26" y="64.46" width="10.92" height="1.05" fill="#dcdcaa" opacity="0.50"/><rect x="24.18" y="64.46" width="0.78" height="1.05" fill="#d4d4d4" opacity="0.30"/><rect x="24.96" y="64.46" width="2.34" height="1.05" fill="#9cdcfe" opacity="0.50"/><rect x="28.08" y="64.46" width="1.56" height="1.05" fill="#d4d4d4" opacity="0.30"/><rect x="30.42" y="64.46" width="0.78" height="1.05" fill="#d4d4d4" opacity="0.30"/><rect x="15.60" y="66.03" width="2.34" height="1.05" fill="#9cdcfe" opacity="0.50"/><rect x="17.94" y="66.03" width="0.78" height="1.05" fill="#d4d4d4" opacity="0.30"/><rect x="18.72" y="66.03" width="14.04" height="1.05" fill="#4ec9b0" opacity="0.50"/><rect x="32.76" y="66.03" width="0.78" height="1.05" fill="#d4d4d4" opacity="0.30"/><rect x="33.54" y="66.03" width="16.38" height="1.05" fill="#4ec9b0" opacity="0.50"/><rect x="50.70" y="66.03" width="0.78" height="1.05" fill="#d4d4d4" opacity="0.30"/><rect x="18.72" y="67.59" width="7.80" height="1.05" fill="#4ec9b0" opacity="0.50"/><rect x="26.52" y="67.59" width="0.78" height="1.05" fill="#d4d4d4" opacity="0.30"/><rect x="27.30" y="67.59" width="3.12" height="1.05" fill="#4ec9b0" opacity="0.50"/><rect x="30.42" y="67.59" width="0.78" height="1.05" fill="#d4d4d4" opacity="0.30"/><rect x="31.20" y="67.59" width="16.38" height="1.05" fill="#4ec9b0" opacity="0.50"/><rect x="47.58" y="67.59" width="0.78" height="1.05" fill="#d4d4d4" opacity="0.30"/><rect x="48.36" y="67.59" width="4.68" height="1.05" fill="#4ec9b0" opacity="0.50"/><rect x="53.04" y="67.59" width="0.78" height="1.05" fill="#d4d4d4" opacity="0.30"/><rect x="12.48" y="69.15" width="2.34" height="1.05" fill="#d4d4d4" opacity="0.50"/><rect x="9.36" y="70.71" width="6.24" height="1.05" fill="#9cdcfe" opacity="0.50"/><rect x="15.60" y="70.71" width="0.78" height="1.05" fill="#d4d4d4" opacity="0.30"/><rect x="16.38" y="70.71" width="5.46" height="1.05" fill="#dcdcaa" opacity="0.50"/><rect x="21.84" y="70.71" width="2.34" height="1.05" fill="#d4d4d4" opacity="0.50"/><rect x="9.36" y="72.28" width="6.24" height="1.05" fill="#9cdcfe" opacity="0.50"/><rect x="15.60" y="72.28" width="0.78" height="1.05" fill="#d4d4d4" opacity="0.30"/><rect x="16.38" y="72.28" width="7.02" height="1.05" fill="#dcdcaa" opacity="0.50"/><rect x="23.40" y="72.28" width="0.78" height="1.05" fill="#d4d4d4" opacity="0.30"/><rect x="24.18" y="72.28" width="14.04" height="1.05" fill="#4ec9b0" opacity="0.50"/><rect x="38.22" y="72.28" width="1.56" height="1.05" fill="#d4d4d4" opacity="0.30"/><rect x="39.78" y="72.28" width="10.14" height="1.05" fill="#9cdcfe" opacity="0.50"/><rect x="49.92" y="72.28" width="0.78" height="1.05" fill="#d4d4d4" opacity="0.30"/><rect x="50.70" y="72.28" width="7.80" height="1.05" fill="#dcdcaa" opacity="0.50"/><rect x="58.50" y="72.28" width="0.78" height="1.05" fill="#d4d4d4" opacity="0.30"/><rect x="59.28" y="72.28" width="15.60" height="1.05" fill="#ce9178" opacity="0.50"/><rect x="74.88" y="72.28" width="2.34" height="1.05" fill="#d4d4d4" opacity="0.50"/><rect x="9.36" y="73.84" width="6.24" height="1.05" fill="#9cdcfe" opacity="0.50"/><rect x="15.60" y="73.84" width="0.78" height="1.05" fill="#d4d4d4" opacity="0.30"/><rect x="16.38" y="73.84" width="10.14" height="1.05" fill="#dcdcaa" opacity="0.50"/><rect x="26.52" y="73.84" width="2.34" height="1.05" fill="#d4d4d4" opacity="0.50"/><rect x="9.36" y="75.40" width="6.24" height="1.05" fill="#9cdcfe" opacity="0.50"/><rect x="15.60" y="75.40" width="0.78" height="1.05" fill="#d4d4d4" opacity="0.30"/><rect x="16.38" y="75.40" width="9.36" height="1.05" fill="#dcdcaa" opacity="0.50"/><rect x="25.74" y="75.40" width="0.78" height="1.05" fill="#d4d4d4" opacity="0.30"/><rect x="26.52" y="75.40" width="3.12" height="1.05" fill="#4ec9b0" opacity="0.50"/><rect x="29.64" y="75.40" width="3.12" height="1.05" fill="#d4d4d4" opacity="0.50"/><rect x="9.36" y="76.96" width="6.24" height="1.05" fill="#9cdcfe" opacity="0.50"/><rect x="15.60" y="76.96" width="0.78" height="1.05" fill="#d4d4d4" opacity="0.30"/><rect x="16.38" y="76.96" width="7.02" height="1.05" fill="#dcdcaa" opacity="0.50"/><rect x="23.40" y="76.96" width="0.78" height="1.05" fill="#d4d4d4" opacity="0.30"/><rect x="24.18" y="76.96" width="11.70" height="1.05" fill="#4ec9b0" opacity="0.50"/><rect x="35.88" y="76.96" width="0.78" height="1.05" fill="#d4d4d4" opacity="0.30"/><rect x="37.44" y="76.96" width="10.92" height="1.05" fill="#4ec9b0" opacity="0.50"/><rect x="48.36" y="76.96" width="3.12" height="1.05" fill="#d4d4d4" opacity="0.50"/><rect x="9.36" y="78.53" width="6.24" height="1.05" fill="#9cdcfe" opacity="0.50"/><rect x="15.60" y="78.53" width="0.78" height="1.05" fill="#d4d4d4" opacity="0.30"/><rect x="16.38" y="78.53" width="7.02" height="1.05" fill="#dcdcaa" opacity="0.50"/><rect x="23.40" y="78.53" width="0.78" height="1.05" fill="#d4d4d4" opacity="0.30"/><rect x="24.18" y="78.53" width="13.26" height="1.05" fill="#4ec9b0" opacity="0.50"/><rect x="37.44" y="78.53" width="0.78" height="1.05" fill="#d4d4d4" opacity="0.30"/><rect x="39.00" y="78.53" width="12.48" height="1.05" fill="#4ec9b0" opacity="0.50"/><rect x="51.48" y="78.53" width="3.12" height="1.05" fill="#d4d4d4" opacity="0.50"/><rect x="9.36" y="80.09" width="6.24" height="1.05" fill="#9cdcfe" opacity="0.50"/><rect x="15.60" y="80.09" width="0.78" height="1.05" fill="#d4d4d4" opacity="0.30"/><rect x="16.38" y="80.09" width="13.26" height="1.05" fill="#dcdcaa" opacity="0.50"/><rect x="29.64" y="80.09" width="0.78" height="1.05" fill="#d4d4d4" opacity="0.30"/><rect x="30.42" y="80.09" width="13.26" height="1.05" fill="#4ec9b0" opacity="0.50"/><rect x="43.68" y="80.09" width="0.78" height="1.05" fill="#d4d4d4" opacity="0.30"/><rect x="44.46" y="80.09" width="15.60" height="1.05" fill="#4ec9b0" opacity="0.50"/><rect x="60.06" y="80.09" width="0.78" height="1.05" fill="#d4d4d4" opacity="0.30"/><rect x="12.48" y="81.65" width="0.78" height="1.05" fill="#d4d4d4" opacity="0.30"/><rect x="13.26" y="81.65" width="9.36" height="1.05" fill="#dcdcaa" opacity="0.50"/><rect x="22.62" y="81.65" width="0.78" height="1.05" fill="#d4d4d4" opacity="0.30"/><rect x="23.40" y="81.65" width="5.46" height="1.05" fill="#9cdcfe" opacity="0.50"/><rect x="29.64" y="81.65" width="1.56" height="1.05" fill="#d4d4d4" opacity="0.30"/><rect x="31.98" y="81.65" width="0.78" height="1.05" fill="#d4d4d4" opacity="0.30"/><rect x="15.60" y="83.21" width="5.46" height="1.05" fill="#9cdcfe" opacity="0.50"/><rect x="21.06" y="83.21" width="0.78" height="1.05" fill="#d4d4d4" opacity="0.30"/><rect x="21.84" y="83.21" width="19.50" height="1.05" fill="#4ec9b0" opacity="0.50"/><rect x="42.12" y="83.21" width="0.78" height="1.05" fill="#d4d4d4" opacity="0.30"/><rect x="43.68" y="83.21" width="2.34" height="1.05" fill="#569cd6" opacity="0.50"/><rect x="46.80" y="83.21" width="19.50" height="1.05" fill="#dcdcaa" opacity="0.50"/><rect x="15.60" y="84.78" width="0.78" height="1.05" fill="#d4d4d4" opacity="0.30"/><rect x="18.72" y="86.34" width="18.72" height="1.05" fill="#4ec9b0" opacity="0.50"/><rect x="38.22" y="86.34" width="0.78" height="1.05" fill="#d4d4d4" opacity="0.30"/><rect x="39.78" y="86.34" width="3.12" height="1.05" fill="#569cd6" opacity="0.50"/><rect x="42.90" y="86.34" width="0.78" height="1.05" fill="#d4d4d4" opacity="0.30"/><rect x="18.72" y="87.90" width="12.48" height="1.05" fill="#4ec9b0" opacity="0.50"/><rect x="31.98" y="87.90" width="0.78" height="1.05" fill="#d4d4d4" opacity="0.30"/><rect x="33.54" y="87.90" width="2.34" height="1.05" fill="#569cd6" opacity="0.50"/><rect x="36.66" y="87.90" width="15.60" height="1.05" fill="#dcdcaa" opacity="0.50"/><rect x="52.26" y="87.90" width="0.78" height="1.05" fill="#d4d4d4" opacity="0.30"/><rect x="53.04" y="87.90" width="6.24" height="1.05" fill="#4ec9b0" opacity="0.50"/><rect x="59.28" y="87.90" width="0.78" height="1.05" fill="#d4d4d4" opacity="0.30"/><rect x="60.06" y="87.90" width="3.90" height="1.05" fill="#dcdcaa" opacity="0.50"/><rect x="21.84" y="89.46" width="0.78" height="1.05" fill="#d4d4d4" opacity="0.30"/><rect x="22.62" y="89.46" width="6.24" height="1.05" fill="#dcdcaa" opacity="0.50"/><rect x="28.86" y="89.46" width="0.78" height="1.05" fill="#d4d4d4" opacity="0.30"/><rect x="29.64" y="89.46" width="10.14" height="1.05" fill="#9cdcfe" opacity="0.50"/><rect x="39.78" y="89.46" width="0.78" height="1.05" fill="#d4d4d4" opacity="0.30"/><rect x="40.56" y="89.46" width="7.80" height="1.05" fill="#dcdcaa" opacity="0.50"/><rect x="48.36" y="89.46" width="0.78" height="1.05" fill="#d4d4d4" opacity="0.30"/><rect x="49.14" y="89.46" width="14.82" height="1.05" fill="#ce9178" opacity="0.50"/><rect x="63.96" y="89.46" width="1.56" height="1.05" fill="#d4d4d4" opacity="0.30"/><rect x="65.52" y="89.46" width="3.90" height="1.05" fill="#4ec9b0" opacity="0.50"/><rect x="69.42" y="89.46" width="2.34" height="1.05" fill="#d4d4d4" opacity="0.50"/><rect x="18.72" y="91.03" width="10.92" height="1.05" fill="#4ec9b0" opacity="0.50"/><rect x="30.42" y="91.03" width="0.78" height="1.05" fill="#d4d4d4" opacity="0.30"/><rect x="31.98" y="91.03" width="3.90" height="1.05" fill="#569cd6" opacity="0.50"/><rect x="35.88" y="91.03" width="0.78" height="1.05" fill="#d4d4d4" opacity="0.30"/><rect x="18.72" y="92.59" width="12.48" height="1.05" fill="#4ec9b0" opacity="0.50"/><rect x="31.98" y="92.59" width="0.78" height="1.05" fill="#d4d4d4" opacity="0.30"/><rect x="33.54" y="92.59" width="3.90" height="1.05" fill="#569cd6" opacity="0.50"/><rect x="15.60" y="94.15" width="1.56" height="1.05" fill="#d4d4d4" opacity="0.30"/><rect x="12.48" y="95.71" width="2.34" height="1.05" fill="#d4d4d4" opacity="0.50"/><rect x="9.36" y="97.28" width="6.24" height="1.05" fill="#9cdcfe" opacity="0.50"/><rect x="15.60" y="97.28" width="0.78" height="1.05" fill="#d4d4d4" opacity="0.30"/><rect x="16.38" y="97.28" width="7.02" height="1.05" fill="#dcdcaa" opacity="0.50"/><rect x="23.40" y="97.28" width="0.78" height="1.05" fill="#d4d4d4" opacity="0.30"/><rect x="24.18" y="97.28" width="11.70" height="1.05" fill="#4ec9b0" opacity="0.50"/><rect x="35.88" y="97.28" width="3.12" height="1.05" fill="#d4d4d4" opacity="0.50"/><rect x="6.24" y="98.84" width="0.78" height="1.05" fill="#d4d4d4" opacity="0.30"/><rect x="6.24" y="101.96" width="4.68" height="1.05" fill="#569cd6" opacity="0.50"/><rect x="11.70" y="101.96" width="3.12" height="1.05" fill="#569cd6" opacity="0.50"/><rect x="15.60" y="101.96" width="21.84" height="1.05" fill="#dcdcaa" opacity="0.50"/><rect x="37.44" y="101.96" width="0.78" height="1.05" fill="#d4d4d4" opacity="0.30"/><rect x="38.22" y="101.96" width="14.04" height="1.05" fill="#4ec9b0" opacity="0.50"/><rect x="53.04" y="101.96" width="6.24" height="1.05" fill="#9cdcfe" opacity="0.50"/><rect x="59.28" y="101.96" width="0.78" height="1.05" fill="#d4d4d4" opacity="0.30"/><rect x="6.24" y="103.53" width="0.78" height="1.05" fill="#d4d4d4" opacity="0.30"/><rect x="9.36" y="105.09" width="6.24" height="1.05" fill="#9cdcfe" opacity="0.50"/><rect x="15.60" y="105.09" width="0.78" height="1.05" fill="#d4d4d4" opacity="0.30"/><rect x="16.38" y="105.09" width="9.36" height="1.05" fill="#dcdcaa" opacity="0.50"/><rect x="25.74" y="105.09" width="0.78" height="1.05" fill="#d4d4d4" opacity="0.30"/><rect x="26.52" y="105.09" width="8.58" height="1.05" fill="#4ec9b0" opacity="0.50"/><rect x="35.10" y="105.09" width="1.56" height="1.05" fill="#d4d4d4" opacity="0.30"/><rect x="36.66" y="105.09" width="0.78" height="1.05" fill="#9cdcfe" opacity="0.30"/><rect x="38.22" y="105.09" width="1.56" height="1.05" fill="#d4d4d4" opacity="0.30"/><rect x="40.56" y="105.09" width="0.78" height="1.05" fill="#9cdcfe" opacity="0.30"/><rect x="41.34" y="105.09" width="0.78" height="1.05" fill="#d4d4d4" opacity="0.30"/><rect x="42.12" y="105.09" width="7.02" height="1.05" fill="#dcdcaa" opacity="0.50"/><rect x="49.14" y="105.09" width="0.78" height="1.05" fill="#d4d4d4" opacity="0.30"/><rect x="49.92" y="105.09" width="10.14" height="1.05" fill="#9cdcfe" opacity="0.50"/><rect x="60.06" y="105.09" width="0.78" height="1.05" fill="#d4d4d4" opacity="0.30"/><rect x="60.84" y="105.09" width="14.82" height="1.05" fill="#dcdcaa" opacity="0.50"/><rect x="75.66" y="105.09" width="0.78" height="1.05" fill="#d4d4d4" opacity="0.30"/><rect x="76.44" y="105.09" width="2.16" height="1.05" fill="#ce9178" opacity="0.50"/><rect x="9.36" y="106.65" width="6.24" height="1.05" fill="#9cdcfe" opacity="0.50"/><rect x="15.60" y="106.65" width="0.78" height="1.05" fill="#d4d4d4" opacity="0.30"/><rect x="16.38" y="106.65" width="4.68" height="1.05" fill="#dcdcaa" opacity="0.50"/><rect x="21.06" y="106.65" width="2.34" height="1.05" fill="#d4d4d4" opacity="0.50"/><rect x="23.40" y="106.65" width="17.94" height="1.05" fill="#dcdcaa" opacity="0.50"/><rect x="41.34" y="106.65" width="0.78" height="1.05" fill="#d4d4d4" opacity="0.30"/><rect x="42.12" y="106.65" width="15.60" height="1.05" fill="#4ec9b0" opacity="0.50"/><rect x="57.72" y="106.65" width="0.78" height="1.05" fill="#d4d4d4" opacity="0.30"/><rect x="58.50" y="106.65" width="8.58" height="1.05" fill="#4ec9b0" opacity="0.50"/><rect x="67.08" y="106.65" width="0.78" height="1.05" fill="#d4d4d4" opacity="0.30"/><rect x="12.48" y="108.21" width="0.78" height="1.05" fill="#d4d4d4" opacity="0.30"/><rect x="13.26" y="108.21" width="10.92" height="1.05" fill="#dcdcaa" opacity="0.50"/><rect x="24.18" y="108.21" width="0.78" height="1.05" fill="#d4d4d4" opacity="0.30"/><rect x="24.96" y="108.21" width="2.34" height="1.05" fill="#9cdcfe" opacity="0.50"/><rect x="28.08" y="108.21" width="1.56" height="1.05" fill="#d4d4d4" opacity="0.30"/><rect x="30.42" y="108.21" width="0.78" height="1.05" fill="#d4d4d4" opacity="0.30"/><rect x="15.60" y="109.78" width="2.34" height="1.05" fill="#9cdcfe" opacity="0.50"/><rect x="17.94" y="109.78" width="0.78" height="1.05" fill="#d4d4d4" opacity="0.30"/><rect x="18.72" y="109.78" width="14.04" height="1.05" fill="#4ec9b0" opacity="0.50"/><rect x="32.76" y="109.78" width="0.78" height="1.05" fill="#d4d4d4" opacity="0.30"/><rect x="33.54" y="109.78" width="16.38" height="1.05" fill="#4ec9b0" opacity="0.50"/><rect x="50.70" y="109.78" width="0.78" height="1.05" fill="#d4d4d4" opacity="0.30"/><rect x="18.72" y="111.34" width="7.80" height="1.05" fill="#4ec9b0" opacity="0.50"/><rect x="26.52" y="111.34" width="0.78" height="1.05" fill="#d4d4d4" opacity="0.30"/><rect x="27.30" y="111.34" width="3.12" height="1.05" fill="#4ec9b0" opacity="0.50"/><rect x="30.42" y="111.34" width="0.78" height="1.05" fill="#d4d4d4" opacity="0.30"/><rect x="31.20" y="111.34" width="16.38" height="1.05" fill="#4ec9b0" opacity="0.50"/><rect x="47.58" y="111.34" width="0.78" height="1.05" fill="#d4d4d4" opacity="0.30"/><rect x="48.36" y="111.34" width="4.68" height="1.05" fill="#4ec9b0" opacity="0.50"/><rect x="53.04" y="111.34" width="0.78" height="1.05" fill="#d4d4d4" opacity="0.30"/><rect x="12.48" y="112.90" width="2.34" height="1.05" fill="#d4d4d4" opacity="0.50"/><rect x="9.36" y="114.46" width="6.24" height="1.05" fill="#9cdcfe" opacity="0.50"/><rect x="15.60" y="114.46" width="0.78" height="1.05" fill="#d4d4d4" opacity="0.30"/><rect x="16.38" y="114.46" width="5.46" height="1.05" fill="#dcdcaa" opacity="0.50"/><rect x="21.84" y="114.46" width="2.34" height="1.05" fill="#d4d4d4" opacity="0.50"/><rect x="9.36" y="116.03" width="6.24" height="1.05" fill="#9cdcfe" opacity="0.50"/><rect x="15.60" y="116.03" width="0.78" height="1.05" fill="#d4d4d4" opacity="0.30"/><rect x="16.38" y="116.03" width="7.02" height="1.05" fill="#dcdcaa" opacity="0.50"/><rect x="23.40" y="116.03" width="0.78" height="1.05" fill="#d4d4d4" opacity="0.30"/><rect x="24.18" y="116.03" width="14.04" height="1.05" fill="#4ec9b0" opacity="0.50"/><rect x="38.22" y="116.03" width="1.56" height="1.05" fill="#d4d4d4" opacity="0.30"/><rect x="39.78" y="116.03" width="10.14" height="1.05" fill="#9cdcfe" opacity="0.50"/><rect x="49.92" y="116.03" width="0.78" height="1.05" fill="#d4d4d4" opacity="0.30"/><rect x="50.70" y="116.03" width="7.80" height="1.05" fill="#dcdcaa" opacity="0.50"/><rect x="58.50" y="116.03" width="0.78" height="1.05" fill="#d4d4d4" opacity="0.30"/><rect x="59.28" y="116.03" width="15.60" height="1.05" fill="#ce9178" opacity="0.50"/><rect x="74.88" y="116.03" width="2.34" height="1.05" fill="#d4d4d4" opacity="0.50"/><rect x="9.36" y="117.59" width="6.24" height="1.05" fill="#9cdcfe" opacity="0.50"/><rect x="15.60" y="117.59" width="0.78" height="1.05" fill="#d4d4d4" opacity="0.30"/><rect x="16.38" y="117.59" width="10.14" height="1.05" fill="#dcdcaa" opacity="0.50"/><rect x="26.52" y="117.59" width="2.34" height="1.05" fill="#d4d4d4" opacity="0.50"/><rect x="9.36" y="119.15" width="6.24" height="1.05" fill="#9cdcfe" opacity="0.50"/><rect x="15.60" y="119.15" width="0.78" height="1.05" fill="#d4d4d4" opacity="0.30"/><rect x="16.38" y="119.15" width="9.36" height="1.05" fill="#dcdcaa" opacity="0.50"/><rect x="25.74" y="119.15" width="0.78" height="1.05" fill="#d4d4d4" opacity="0.30"/><rect x="26.52" y="119.15" width="3.12" height="1.05" fill="#4ec9b0" opacity="0.50"/><rect x="29.64" y="119.15" width="3.12" height="1.05" fill="#d4d4d4" opacity="0.50"/><rect x="9.36" y="120.71" width="6.24" height="1.05" fill="#9cdcfe" opacity="0.50"/><rect x="15.60" y="120.71" width="0.78" height="1.05" fill="#d4d4d4" opacity="0.30"/><rect x="16.38" y="120.71" width="7.02" height="1.05" fill="#dcdcaa" opacity="0.50"/><rect x="23.40" y="120.71" width="0.78" height="1.05" fill="#d4d4d4" opacity="0.30"/><rect x="24.18" y="120.71" width="11.70" height="1.05" fill="#4ec9b0" opacity="0.50"/><rect x="35.88" y="120.71" width="0.78" height="1.05" fill="#d4d4d4" opacity="0.30"/><rect x="37.44" y="120.71" width="10.92" height="1.05" fill="#4ec9b0" opacity="0.50"/><rect x="48.36" y="120.71" width="3.12" height="1.05" fill="#d4d4d4" opacity="0.50"/><rect x="9.36" y="122.28" width="6.24" height="1.05" fill="#9cdcfe" opacity="0.50"/><rect x="15.60" y="122.28" width="0.78" height="1.05" fill="#d4d4d4" opacity="0.30"/><rect x="16.38" y="122.28" width="7.02" height="1.05" fill="#dcdcaa" opacity="0.50"/><rect x="23.40" y="122.28" width="0.78" height="1.05" fill="#d4d4d4" opacity="0.30"/><rect x="24.18" y="122.28" width="13.26" height="1.05" fill="#4ec9b0" opacity="0.50"/><rect x="37.44" y="122.28" width="0.78" height="1.05" fill="#d4d4d4" opacity="0.30"/><rect x="39.00" y="122.28" width="12.48" height="1.05" fill="#4ec9b0" opacity="0.50"/><rect x="51.48" y="122.28" width="3.12" height="1.05" fill="#d4d4d4" opacity="0.50"/><rect x="9.36" y="123.84" width="6.24" height="1.05" fill="#9cdcfe" opacity="0.50"/><rect x="15.60" y="123.84" width="0.78" height="1.05" fill="#d4d4d4" opacity="0.30"/><rect x="16.38" y="123.84" width="13.26" height="1.05" fill="#dcdcaa" opacity="0.50"/><rect x="29.64" y="123.84" width="0.78" height="1.05" fill="#d4d4d4" opacity="0.30"/><rect x="30.42" y="123.84" width="13.26" height="1.05" fill="#4ec9b0" opacity="0.50"/><rect x="43.68" y="123.84" width="0.78" height="1.05" fill="#d4d4d4" opacity="0.30"/><rect x="44.46" y="123.84" width="15.60" height="1.05" fill="#4ec9b0" opacity="0.50"/><rect x="60.06" y="123.84" width="0.78" height="1.05" fill="#d4d4d4" opacity="0.30"/><rect x="12.48" y="125.40" width="0.78" height="1.05" fill="#d4d4d4" opacity="0.30"/><rect x="13.26" y="125.40" width="9.36" height="1.05" fill="#dcdcaa" opacity="0.50"/><rect x="22.62" y="125.40" width="0.78" height="1.05" fill="#d4d4d4" opacity="0.30"/><rect x="23.40" y="125.40" width="5.46" height="1.05" fill="#9cdcfe" opacity="0.50"/><rect x="29.64" y="125.40" width="1.56" height="1.05" fill="#d4d4d4" opacity="0.30"/><rect x="31.98" y="125.40" width="0.78" height="1.05" fill="#d4d4d4" opacity="0.30"/><rect x="15.60" y="126.96" width="5.46" height="1.05" fill="#9cdcfe" opacity="0.50"/><rect x="21.06" y="126.96" width="0.78" height="1.05" fill="#d4d4d4" opacity="0.30"/><rect x="21.84" y="126.96" width="19.50" height="1.05" fill="#4ec9b0" opacity="0.50"/><rect x="42.12" y="126.96" width="0.78" height="1.05" fill="#d4d4d4" opacity="0.30"/><rect x="43.68" y="126.96" width="2.34" height="1.05" fill="#569cd6" opacity="0.50"/><rect x="46.80" y="126.96" width="19.50" height="1.05" fill="#dcdcaa" opacity="0.50"/><rect x="15.60" y="128.53" width="0.78" height="1.05" fill="#d4d4d4" opacity="0.30"/><rect x="18.72" y="130.09" width="18.72" height="1.05" fill="#4ec9b0" opacity="0.50"/><rect x="38.22" y="130.09" width="0.78" height="1.05" fill="#d4d4d4" opacity="0.30"/><rect x="39.78" y="130.09" width="3.12" height="1.05" fill="#569cd6" opacity="0.50"/><rect x="42.90" y="130.09" width="0.78" height="1.05" fill="#d4d4d4" opacity="0.30"/><rect x="18.72" y="131.65" width="12.48" height="1.05" fill="#4ec9b0" opacity="0.50"/><rect x="31.98" y="131.65" width="0.78" height="1.05" fill="#d4d4d4" opacity="0.30"/><rect x="33.54" y="131.65" width="2.34" height="1.05" fill="#569cd6" opacity="0.50"/><rect x="36.66" y="131.65" width="15.60" height="1.05" fill="#dcdcaa" opacity="0.50"/><rect x="52.26" y="131.65" width="0.78" height="1.05" fill="#d4d4d4" opacity="0.30"/><rect x="53.04" y="131.65" width="6.24" height="1.05" fill="#4ec9b0" opacity="0.50"/><rect x="59.28" y="131.65" width="0.78" height="1.05" fill="#d4d4d4" opacity="0.30"/><rect x="60.06" y="131.65" width="3.90" height="1.05" fill="#dcdcaa" opacity="0.50"/><rect x="21.84" y="133.21" width="0.78" height="1.05" fill="#d4d4d4" opacity="0.30"/><rect x="22.62" y="133.21" width="6.24" height="1.05" fill="#dcdcaa" opacity="0.50"/><rect x="28.86" y="133.21" width="0.78" height="1.05" fill="#d4d4d4" opacity="0.30"/><rect x="29.64" y="133.21" width="10.14" height="1.05" fill="#9cdcfe" opacity="0.50"/><rect x="39.78" y="133.21" width="0.78" height="1.05" fill="#d4d4d4" opacity="0.30"/><rect x="40.56" y="133.21" width="7.80" height="1.05" fill="#dcdcaa" opacity="0.50"/><rect x="48.36" y="133.21" width="0.78" height="1.05" fill="#d4d4d4" opacity="0.30"/><rect x="49.14" y="133.21" width="14.82" height="1.05" fill="#ce9178" opacity="0.50"/><rect x="63.96" y="133.21" width="1.56" height="1.05" fill="#d4d4d4" opacity="0.30"/><rect x="65.52" y="133.21" width="3.90" height="1.05" fill="#4ec9b0" opacity="0.50"/><rect x="69.42" y="133.21" width="2.34" height="1.05" fill="#d4d4d4" opacity="0.50"/><rect x="18.72" y="134.78" width="10.92" height="1.05" fill="#4ec9b0" opacity="0.50"/><rect x="30.42" y="134.78" width="0.78" height="1.05" fill="#d4d4d4" opacity="0.30"/><rect x="31.98" y="134.78" width="3.90" height="1.05" fill="#569cd6" opacity="0.50"/><rect x="35.88" y="134.78" width="0.78" height="1.05" fill="#d4d4d4" opacity="0.30"/><rect x="18.72" y="136.34" width="12.48" height="1.05" fill="#4ec9b0" opacity="0.50"/><rect x="31.98" y="136.34" width="0.78" height="1.05" fill="#d4d4d4" opacity="0.30"/><rect x="33.54" y="136.34" width="3.90" height="1.05" fill="#569cd6" opacity="0.50"/><rect x="15.60" y="137.90" width="1.56" height="1.05" fill="#d4d4d4" opacity="0.30"/><rect x="12.48" y="139.46" width="2.34" height="1.05" fill="#d4d4d4" opacity="0.50"/><rect x="9.36" y="141.03" width="6.24" height="1.05" fill="#9cdcfe" opacity="0.50"/><rect x="15.60" y="141.03" width="0.78" height="1.05" fill="#d4d4d4" opacity="0.30"/><rect x="16.38" y="141.03" width="7.02" height="1.05" fill="#dcdcaa" opacity="0.50"/><rect x="23.40" y="141.03" width="0.78" height="1.05" fill="#d4d4d4" opacity="0.30"/><rect x="24.18" y="141.03" width="11.70" height="1.05" fill="#4ec9b0" opacity="0.50"/><rect x="35.88" y="141.03" width="3.12" height="1.05" fill="#d4d4d4" opacity="0.50"/><rect x="6.24" y="142.59" width="0.78" height="1.05" fill="#d4d4d4" opacity="0.30"/><rect x="6.24" y="145.71" width="72.36" height="1.05" fill="#6a9955" opacity="0.55"/><rect x="6.24" y="147.28" width="4.68" height="1.05" fill="#569cd6" opacity="0.50"/><rect x="11.70" y="147.28" width="3.12" height="1.05" fill="#569cd6" opacity="0.50"/><rect x="15.60" y="147.28" width="7.02" height="1.05" fill="#dcdcaa" opacity="0.50"/><rect x="22.62" y="147.28" width="0.78" height="1.05" fill="#d4d4d4" opacity="0.30"/><rect x="23.40" y="147.28" width="14.82" height="1.05" fill="#4ec9b0" opacity="0.50"/><rect x="39.00" y="147.28" width="2.34" height="1.05" fill="#9cdcfe" opacity="0.50"/><rect x="41.34" y="147.28" width="0.78" height="1.05" fill="#d4d4d4" opacity="0.30"/><rect x="42.90" y="147.28" width="14.82" height="1.05" fill="#4ec9b0" opacity="0.50"/><rect x="58.50" y="147.28" width="2.34" height="1.05" fill="#9cdcfe" opacity="0.50"/><rect x="60.84" y="147.28" width="0.78" height="1.05" fill="#d4d4d4" opacity="0.30"/><rect x="62.40" y="147.28" width="3.12" height="1.05" fill="#4ec9b0" opacity="0.50"/><rect x="66.30" y="147.28" width="4.68" height="1.05" fill="#9cdcfe" opacity="0.50"/><rect x="70.98" y="147.28" width="0.78" height="1.05" fill="#d4d4d4" opacity="0.30"/><rect x="6.24" y="148.84" width="0.78" height="1.05" fill="#d4d4d4" opacity="0.30"/><rect x="9.36" y="150.40" width="1.56" height="1.05" fill="#569cd6" opacity="0.30"/><rect x="11.70" y="150.40" width="0.78" height="1.05" fill="#d4d4d4" opacity="0.30"/><rect x="12.48" y="150.40" width="2.34" height="1.05" fill="#9cdcfe" opacity="0.50"/><rect x="14.82" y="150.40" width="0.78" height="1.05" fill="#d4d4d4" opacity="0.30"/><rect x="15.60" y="150.40" width="10.14" height="1.05" fill="#dcdcaa" opacity="0.50"/><rect x="25.74" y="150.40" width="2.34" height="1.05" fill="#d4d4d4" opacity="0.50"/><rect x="9.36" y="151.96" width="0.78" height="1.05" fill="#d4d4d4" opacity="0.30"/><rect x="12.48" y="153.53" width="2.34" height="1.05" fill="#9cdcfe" opacity="0.50"/><rect x="14.82" y="153.53" width="0.78" height="1.05" fill="#d4d4d4" opacity="0.30"/><rect x="15.60" y="153.53" width="19.50" height="1.05" fill="#dcdcaa" opacity="0.50"/><rect x="35.10" y="153.53" width="2.34" height="1.05" fill="#d4d4d4" opacity="0.50"/><rect x="9.36" y="155.09" width="0.78" height="1.05" fill="#d4d4d4" opacity="0.30"/><rect x="9.36" y="156.65" width="3.12" height="1.05" fill="#569cd6" opacity="0.50"/><rect x="9.36" y="158.21" width="0.78" height="1.05" fill="#d4d4d4" opacity="0.30"/><rect x="12.48" y="159.78" width="2.34" height="1.05" fill="#9cdcfe" opacity="0.50"/><rect x="14.82" y="159.78" width="0.78" height="1.05" fill="#d4d4d4" opacity="0.30"/><rect x="15.60" y="159.78" width="14.82" height="1.05" fill="#dcdcaa" opacity="0.50"/><rect x="30.42" y="159.78" width="0.78" height="1.05" fill="#d4d4d4" opacity="0.30"/><rect x="31.20" y="159.78" width="5.46" height="1.05" fill="#9cdcfe" opacity="0.50"/><rect x="37.44" y="159.78" width="1.56" height="1.05" fill="#d4d4d4" opacity="0.30"/><rect x="39.78" y="159.78" width="0.78" height="1.05" fill="#d4d4d4" opacity="0.30"/><rect x="15.60" y="161.34" width="5.46" height="1.05" fill="#9cdcfe" opacity="0.50"/><rect x="21.06" y="161.34" width="0.78" height="1.05" fill="#d4d4d4" opacity="0.30"/><rect x="21.84" y="161.34" width="2.34" height="1.05" fill="#dcdcaa" opacity="0.50"/><rect x="24.18" y="161.34" width="0.78" height="1.05" fill="#d4d4d4" opacity="0.30"/><rect x="24.96" y="161.34" width="3.90" height="1.05" fill="#569cd6" opacity="0.50"/><rect x="29.64" y="161.34" width="5.46" height="1.05" fill="#9cdcfe" opacity="0.50"/><rect x="35.88" y="161.34" width="1.56" height="1.05" fill="#d4d4d4" opacity="0.30"/><rect x="38.22" y="161.34" width="0.78" height="1.05" fill="#d4d4d4" opacity="0.30"/><rect x="18.72" y="162.90" width="5.46" height="1.05" fill="#9cdcfe" opacity="0.50"/><rect x="24.18" y="162.90" width="0.78" height="1.05" fill="#d4d4d4" opacity="0.30"/><rect x="24.96" y="162.90" width="6.24" height="1.05" fill="#4ec9b0" opacity="0.50"/><rect x="31.20" y="162.90" width="0.78" height="1.05" fill="#d4d4d4" opacity="0.30"/><rect x="31.98" y="162.90" width="7.80" height="1.05" fill="#4ec9b0" opacity="0.50"/><rect x="40.56" y="162.90" width="0.78" height="1.05" fill="#d4d4d4" opacity="0.30"/><rect x="42.12" y="162.90" width="0.78" height="1.05" fill="#d4d4d4" opacity="0.30"/><rect x="42.90" y="162.90" width="2.34" height="1.05" fill="#569cd6" opacity="0.50"/><rect x="45.24" y="162.90" width="0.78" height="1.05" fill="#d4d4d4" opacity="0.30"/><rect x="46.02" y="162.90" width="10.92" height="1.05" fill="#4ec9b0" opacity="0.50"/><rect x="56.94" y="162.90" width="0.78" height="1.05" fill="#d4d4d4" opacity="0.30"/><rect x="57.72" y="162.90" width="14.82" height="1.05" fill="#4ec9b0" opacity="0.50"/><rect x="72.54" y="162.90" width="0.78" height="1.05" fill="#d4d4d4" opacity="0.30"/><rect x="18.72" y="166.03" width="2.34" height="1.05" fill="#569cd6" opacity="0.50"/><rect x="21.84" y="166.03" width="3.90" height="1.05" fill="#9cdcfe" opacity="0.50"/><rect x="26.52" y="166.03" width="0.78" height="1.05" fill="#d4d4d4" opacity="0.30"/><rect x="28.08" y="166.03" width="5.46" height="1.05" fill="#9cdcfe" opacity="0.50"/><rect x="33.54" y="166.03" width="0.78" height="1.05" fill="#d4d4d4" opacity="0.30"/><rect x="34.32" y="166.03" width="6.24" height="1.05" fill="#4ec9b0" opacity="0.50"/><rect x="40.56" y="166.03" width="0.78" height="1.05" fill="#d4d4d4" opacity="0.30"/><rect x="41.34" y="166.03" width="2.34" height="1.05" fill="#dcdcaa" opacity="0.50"/><rect x="43.68" y="166.03" width="0.78" height="1.05" fill="#d4d4d4" opacity="0.30"/><rect x="44.46" y="166.03" width="18.72" height="1.05" fill="#4ec9b0" opacity="0.50"/><rect x="63.18" y="166.03" width="3.12" height="1.05" fill="#d4d4d4" opacity="0.50"/><rect x="18.72" y="167.59" width="1.56" height="1.05" fill="#569cd6" opacity="0.30"/><rect x="21.06" y="167.59" width="0.78" height="1.05" fill="#d4d4d4" opacity="0.30"/><rect x="21.84" y="167.59" width="3.90" height="1.05" fill="#9cdcfe" opacity="0.50"/><rect x="26.52" y="167.59" width="1.56" height="1.05" fill="#d4d4d4" opacity="0.30"/><rect x="28.86" y="167.59" width="3.12" height="1.05" fill="#569cd6" opacity="0.50"/><rect x="31.98" y="167.59" width="0.78" height="1.05" fill="#d4d4d4" opacity="0.30"/><rect x="18.72" y="169.15" width="0.78" height="1.05" fill="#d4d4d4" opacity="0.30"/><rect x="21.84" y="170.71" width="5.46" height="1.05" fill="#9cdcfe" opacity="0.50"/><rect x="27.30" y="170.71" width="0.78" height="1.05" fill="#d4d4d4" opacity="0.30"/><rect x="28.08" y="170.71" width="6.24" height="1.05" fill="#4ec9b0" opacity="0.50"/><rect x="34.32" y="170.71" width="0.78" height="1.05" fill="#d4d4d4" opacity="0.30"/><rect x="35.10" y="170.71" width="14.82" height="1.05" fill="#dcdcaa" opacity="0.50"/><rect x="49.92" y="170.71" width="0.78" height="1.05" fill="#d4d4d4" opacity="0.30"/><rect x="50.70" y="170.71" width="3.90" height="1.05" fill="#9cdcfe" opacity="0.50"/><rect x="54.60" y="170.71" width="0.78" height="1.05" fill="#d4d4d4" opacity="0.30"/><rect x="55.38" y="170.71" width="3.90" height="1.05" fill="#4ec9b0" opacity="0.50"/><rect x="59.28" y="170.71" width="0.78" height="1.05" fill="#d4d4d4" opacity="0.30"/><rect x="60.06" y="170.71" width="5.46" height="1.05" fill="#4ec9b0" opacity="0.50"/><rect x="65.52" y="170.71" width="1.56" height="1.05" fill="#d4d4d4" opacity="0.30"/><rect x="21.84" y="172.28" width="3.90" height="1.05" fill="#569cd6" opacity="0.50"/><rect x="26.52" y="172.28" width="5.46" height="1.05" fill="#9cdcfe" opacity="0.50"/><rect x="31.98" y="172.28" width="0.78" height="1.05" fill="#d4d4d4" opacity="0.30"/><rect x="32.76" y="172.28" width="6.24" height="1.05" fill="#4ec9b0" opacity="0.50"/><rect x="39.00" y="172.28" width="0.78" height="1.05" fill="#d4d4d4" opacity="0.30"/><rect x="39.78" y="172.28" width="7.80" height="1.05" fill="#dcdcaa" opacity="0.50"/><rect x="47.58" y="172.28" width="0.78" height="1.05" fill="#d4d4d4" opacity="0.30"/><rect x="48.36" y="172.28" width="3.90" height="1.05" fill="#9cdcfe" opacity="0.50"/><rect x="52.26" y="172.28" width="0.78" height="1.05" fill="#d4d4d4" opacity="0.30"/><rect x="53.04" y="172.28" width="3.90" height="1.05" fill="#4ec9b0" opacity="0.50"/><rect x="56.94" y="172.28" width="0.78" height="1.05" fill="#d4d4d4" opacity="0.30"/><rect x="57.72" y="172.28" width="5.46" height="1.05" fill="#4ec9b0" opacity="0.50"/><rect x="63.18" y="172.28" width="1.56" height="1.05" fill="#d4d4d4" opacity="0.30"/><rect x="18.72" y="173.84" width="0.78" height="1.05" fill="#d4d4d4" opacity="0.30"/><rect x="15.60" y="175.40" width="2.34" height="1.05" fill="#d4d4d4" opacity="0.50"/><rect x="12.48" y="176.96" width="2.34" height="1.05" fill="#d4d4d4" opacity="0.50"/><rect x="12.48" y="178.53" width="13.26" height="1.05" fill="#6a9955" opacity="0.55"/><rect x="9.36" y="180.09" width="0.78" height="1.05" fill="#d4d4d4" opacity="0.30"/><rect x="9.36" y="183.21" width="22.62" height="1.05" fill="#6a9955" opacity="0.55"/><rect x="9.36" y="184.78" width="17.16" height="1.05" fill="#6a9955" opacity="0.55"/><rect x="9.36" y="186.34" width="2.34" height="1.05" fill="#9cdcfe" opacity="0.50"/><rect x="11.70" y="186.34" width="0.78" height="1.05" fill="#d4d4d4" opacity="0.30"/><rect x="12.48" y="186.34" width="5.46" height="1.05" fill="#dcdcaa" opacity="0.50"/><rect x="17.94" y="186.34" width="0.78" height="1.05" fill="#d4d4d4" opacity="0.30"/><rect x="18.72" y="186.34" width="0.78" height="1.05" fill="#9cdcfe" opacity="0.30"/><rect x="20.28" y="186.34" width="1.56" height="1.05" fill="#d4d4d4" opacity="0.30"/><rect x="22.62" y="186.34" width="0.78" height="1.05" fill="#9cdcfe" opacity="0.30"/><rect x="23.40" y="186.34" width="0.78" height="1.05" fill="#d4d4d4" opacity="0.30"/><rect x="24.18" y="186.34" width="10.92" height="1.05" fill="#dcdcaa" opacity="0.50"/><rect x="35.10" y="186.34" width="2.34" height="1.05" fill="#d4d4d4" opacity="0.50"/><rect x="37.44" y="186.34" width="10.92" height="1.05" fill="#dcdcaa" opacity="0.50"/><rect x="48.36" y="186.34" width="2.34" height="1.05" fill="#d4d4d4" opacity="0.50"/><rect x="50.70" y="186.34" width="10.92" height="1.05" fill="#dcdcaa" opacity="0.50"/><rect x="61.62" y="186.34" width="3.12" height="1.05" fill="#d4d4d4" opacity="0.50"/><rect x="9.36" y="187.90" width="2.34" height="1.05" fill="#9cdcfe" opacity="0.50"/><rect x="11.70" y="187.90" width="0.78" height="1.05" fill="#d4d4d4" opacity="0.30"/><rect x="12.48" y="187.90" width="13.26" height="1.05" fill="#dcdcaa" opacity="0.50"/><rect x="25.74" y="187.90" width="2.34" height="1.05" fill="#d4d4d4" opacity="0.50"/><rect x="9.36" y="189.46" width="2.34" height="1.05" fill="#9cdcfe" opacity="0.50"/><rect x="11.70" y="189.46" width="0.78" height="1.05" fill="#d4d4d4" opacity="0.30"/><rect x="12.48" y="189.46" width="11.70" height="1.05" fill="#dcdcaa" opacity="0.50"/><rect x="24.18" y="189.46" width="2.34" height="1.05" fill="#d4d4d4" opacity="0.50"/><rect x="9.36" y="191.03" width="2.34" height="1.05" fill="#9cdcfe" opacity="0.50"/><rect x="11.70" y="191.03" width="0.78" height="1.05" fill="#d4d4d4" opacity="0.30"/><rect x="12.48" y="191.03" width="10.92" height="1.05" fill="#dcdcaa" opacity="0.50"/><rect x="23.40" y="191.03" width="2.34" height="1.05" fill="#d4d4d4" opacity="0.50"/><rect x="9.36" y="192.59" width="2.34" height="1.05" fill="#9cdcfe" opacity="0.50"/><rect x="11.70" y="192.59" width="0.78" height="1.05" fill="#d4d4d4" opacity="0.30"/><rect x="12.48" y="192.59" width="4.68" height="1.05" fill="#dcdcaa" opacity="0.50"/><rect x="17.16" y="192.59" width="0.78" height="1.05" fill="#d4d4d4" opacity="0.30"/><rect x="17.94" y="192.59" width="4.68" height="1.05" fill="#9cdcfe" opacity="0.50"/><rect x="23.40" y="192.59" width="1.56" height="1.05" fill="#d4d4d4" opacity="0.30"/><rect x="25.74" y="192.59" width="0.78" height="1.05" fill="#d4d4d4" opacity="0.30"/><rect x="12.48" y="194.15" width="4.68" height="1.05" fill="#9cdcfe" opacity="0.50"/><rect x="17.16" y="194.15" width="0.78" height="1.05" fill="#d4d4d4" opacity="0.30"/><rect x="17.94" y="194.15" width="14.82" height="1.05" fill="#dcdcaa" opacity="0.50"/><rect x="32.76" y="194.15" width="0.78" height="1.05" fill="#d4d4d4" opacity="0.30"/><rect x="15.60" y="195.71" width="3.12" height="1.05" fill="#9cdcfe" opacity="0.50"/><rect x="18.72" y="195.71" width="0.78" height="1.05" fill="#d4d4d4" opacity="0.30"/><rect x="20.28" y="195.71" width="10.92" height="1.05" fill="#ce9178" opacity="0.50"/><rect x="31.20" y="195.71" width="0.78" height="1.05" fill="#d4d4d4" opacity="0.30"/><rect x="15.60" y="197.28" width="6.24" height="1.05" fill="#9cdcfe" opacity="0.50"/><rect x="21.84" y="197.28" width="0.78" height="1.05" fill="#d4d4d4" opacity="0.30"/><rect x="23.40" y="197.28" width="2.34" height="1.05" fill="#569cd6" opacity="0.50"/><rect x="26.52" y="197.28" width="0.78" height="1.05" fill="#d4d4d4" opacity="0.30"/><rect x="28.08" y="197.28" width="7.80" height="1.05" fill="#9cdcfe" opacity="0.50"/><rect x="36.66" y="197.28" width="0.78" height="1.05" fill="#d4d4d4" opacity="0.30"/><rect x="38.22" y="197.28" width="7.80" height="1.05" fill="#ce9178" opacity="0.50"/><rect x="46.02" y="197.28" width="0.78" height="1.05" fill="#d4d4d4" opacity="0.30"/><rect x="47.58" y="197.28" width="4.68" height="1.05" fill="#9cdcfe" opacity="0.50"/><rect x="53.04" y="197.28" width="0.78" height="1.05" fill="#d4d4d4" opacity="0.30"/><rect x="54.60" y="197.28" width="5.46" height="1.05" fill="#ce9178" opacity="0.50"/><rect x="60.84" y="197.28" width="0.78" height="1.05" fill="#d4d4d4" opacity="0.30"/><rect x="12.48" y="198.84" width="1.56" height="1.05" fill="#d4d4d4" opacity="0.30"/><rect x="9.36" y="200.40" width="2.34" height="1.05" fill="#d4d4d4" opacity="0.50"/><rect x="6.24" y="201.96" width="0.78" height="1.05" fill="#d4d4d4" opacity="0.30"/><rect x="3.12" y="203.53" width="0.78" height="1.05" fill="#d4d4d4" opacity="0.30"/><rect x="0.00" y="205.09" width="0.78" height="1.05" fill="#d4d4d4" opacity="0.30"/></svg>
<div class="abs" style="left:869.40px;top:0;width:1.6px;height:507px;background:#181818"></div>
<div class="abs" style="left:948.80px;top:0;width:0.8px;height:507px;background:#303031"></div>
<div class="abs" style="left:949.40px;top:111.00px;width:16px;height:76.40px;background:#424242"></div>
<div class="abs" style="left:949.40px;top:130.00px;width:3.2px;height:95.00px;background:#1f5a96"></div>
<div class="abs" style="left:949.40px;top:388.00px;width:3.2px;height:4px;background:#1f5a96"></div>
<div class="abs" style="left:949.40px;top:394.50px;width:3.2px;height:25.5px;background:#1f5a96"></div>
<div class="abs" style="left:952.80px;top:129.40px;width:4.2px;height:4.6px;background:#a3a3a3"></div>
<div class="abs" style="left:952.80px;top:136.60px;width:4.2px;height:3.6px;background:#9a9a9a"></div>
<div class="abs" style="left:949.40px;top:135.60px;width:16px;height:1.2px;background:#9c9c9c"></div>
<div class="abs" style="left:161.00px;top:148.80px;width:1.25px;height:41.40px;background:#86721f"></div>
<div class="abs" style="left:161.20px;top:148.60px;width:279.60px;height:1.35px;background:#86721f"></div>
<div class="abs" style="left:161.20px;top:189.20px;width:79.80px;height:1.3px;background:#86721f"></div>
<div class="abs" style="left:433.20px;top:129.60px;width:8px;height:20.2px;border:1px solid #9a9a9a"></div>
<div class="abs" style="left:233.20px;top:169.90px;width:8px;height:20.2px;border:1px solid #9a9a9a"></div>
<div class="abs" style="left:233.00px;top:170.40px;width:1.5px;height:19.5px;background:#d0d0d0"></div>
<svg class="abs" style="left:68.70px;top:169.90px" width="10" height="13" viewBox="0 0 10 13"><path d="M5 1.1 C2.7 1.1 1.3 2.7 1.3 4.4 C1.3 6.2 2.9 7 3.5 9 L6.5 9 C7.1 7 8.7 6.2 8.7 4.4 C8.7 2.7 7.3 1.1 5 1.1 Z" fill="#4a3605" stroke="#eab01e" stroke-width="1.6" stroke-linejoin="round"/><path d="M3.6 3.6 L6.4 3.6 L5 5.6 Z" fill="#eab01e" opacity="0.75"/><rect x="3.6" y="9.6" width="2.8" height="2.4" fill="#a0a0a0"/></svg>
<div class="abs" style="left:232.60px;top:190.00px;width:257.60px;height:244.55px;background:#252526;border:0.8px solid #3f3f41;overflow:hidden;box-shadow:0 1px 5px rgba(0,0,0,.45)">
<svg class="abs" style="left:3.90px;top:2.90px" width="14" height="15" viewBox="0 0 14 15"><g fill="none" stroke="#a678cf" stroke-width="1.3" stroke-linejoin="round"><path d="M7 1 L12.9 4.1 L12.9 10.9 L7 14 L1.1 10.9 L1.1 4.1 Z"/><path d="M1.1 4.1 L7 7.3 L12.9 4.1 M7 7.3 L7 14"/></g></svg>
<div class="cl sg" style="left:21.50px;top:1.00px">EnableSensitiveDataLogging</div>
<svg class="abs" style="left:3.90px;top:23.21px" width="14" height="15" viewBox="0 0 14 15"><g fill="none" stroke="#a678cf" stroke-width="1.3" stroke-linejoin="round"><path d="M7 1 L12.9 4.1 L12.9 10.9 L7 14 L1.1 10.9 L1.1 4.1 Z"/><path d="M1.1 4.1 L7 7.3 L12.9 4.1 M7 7.3 L7 14"/></g></svg>
<div class="cl sg" style="left:21.50px;top:21.31px">GetType</div>
<svg class="abs" style="left:3.20px;top:44.12px" width="16" height="16" viewBox="0 0 16 16"><path d="M2.3 12.7 L8.2 6.8" stroke="#c5c5c5" stroke-width="2.9" stroke-linecap="round" fill="none"/><circle cx="9.9" cy="5.3" r="4.5" fill="#c5c5c5"/><g transform="translate(9.9 5.3) rotate(-45)"><rect x="-0.4" y="-1.55" width="7" height="3.1" fill="#252526"/></g></svg>
<div class="cl sg" style="left:21.50px;top:41.62px">IsConfigured</div>
<svg class="abs" style="left:3.20px;top:64.44px" width="16" height="16" viewBox="0 0 16 16"><path d="M2.3 12.7 L8.2 6.8" stroke="#c5c5c5" stroke-width="2.9" stroke-linecap="round" fill="none"/><circle cx="9.9" cy="5.3" r="4.5" fill="#c5c5c5"/><g transform="translate(9.9 5.3) rotate(-45)"><rect x="-0.4" y="-1.55" width="7" height="3.1" fill="#252526"/></g></svg>
<div class="cl sg" style="left:21.50px;top:61.94px">Options</div>
<svg class="abs" style="left:3.90px;top:84.15px" width="14" height="15" viewBox="0 0 14 15"><g fill="none" stroke="#a678cf" stroke-width="1.3" stroke-linejoin="round"><path d="M7 1 L12.9 4.1 L12.9 10.9 L7 14 L1.1 10.9 L1.1 4.1 Z"/><path d="M1.1 4.1 L7 7.3 L12.9 4.1 M7 7.3 L7 14"/></g></svg>
<div class="cl sg" style="left:21.50px;top:82.25px">ReplaceService</div>
<svg class="abs" style="left:3.90px;top:104.46px" width="14" height="15" viewBox="0 0 14 15"><g fill="none" stroke="#a678cf" stroke-width="1.3" stroke-linejoin="round"><path d="M7 1 L12.9 4.1 L12.9 10.9 L7 14 L1.1 10.9 L1.1 4.1 Z"/><path d="M1.1 4.1 L7 7.3 L12.9 4.1 M7 7.3 L7 14"/></g></svg>
<div class="cl sg" style="left:21.50px;top:102.56px">UseApplicationServiceProvider</div>
<svg class="abs" style="left:3.90px;top:124.78px" width="14" height="15" viewBox="0 0 14 15"><g fill="none" stroke="#a678cf" stroke-width="1.3" stroke-linejoin="round"><path d="M7 1 L12.9 4.1 L12.9 10.9 L7 14 L1.1 10.9 L1.1 4.1 Z"/><path d="M1.1 4.1 L7 7.3 L12.9 4.1 M7 7.3 L7 14"/></g></svg>
<div class="cl sg" style="left:21.50px;top:122.88px">UseInMemoryDatabase</div>
<svg class="abs" style="left:3.90px;top:145.09px" width="14" height="15" viewBox="0 0 14 15"><g fill="none" stroke="#a678cf" stroke-width="1.3" stroke-linejoin="round"><path d="M7 1 L12.9 4.1 L12.9 10.9 L7 14 L1.1 10.9 L1.1 4.1 Z"/><path d="M1.1 4.1 L7 7.3 L12.9 4.1 M7 7.3 L7 14"/></g></svg>
<div class="cl sg" style="left:21.50px;top:143.19px">UseInternalServiceProvider</div>
<svg class="abs" style="left:3.90px;top:165.40px" width="14" height="15" viewBox="0 0 14 15"><g fill="none" stroke="#a678cf" stroke-width="1.3" stroke-linejoin="round"><path d="M7 1 L12.9 4.1 L12.9 10.9 L7 14 L1.1 10.9 L1.1 4.1 Z"/><path d="M1.1 4.1 L7 7.3 L12.9 4.1 M7 7.3 L7 14"/></g></svg>
<div class="cl sg" style="left:21.50px;top:163.50px">UseLoggerFactory</div>
<svg class="abs" style="left:3.90px;top:185.71px" width="14" height="15" viewBox="0 0 14 15"><g fill="none" stroke="#a678cf" stroke-width="1.3" stroke-linejoin="round"><path d="M7 1 L12.9 4.1 L12.9 10.9 L7 14 L1.1 10.9 L1.1 4.1 Z"/><path d="M1.1 4.1 L7 7.3 L12.9 4.1 M7 7.3 L7 14"/></g></svg>
<div class="cl sg" style="left:21.50px;top:183.81px">UseMemoryCache</div>
<svg class="abs" style="left:3.90px;top:206.03px" width="14" height="15" viewBox="0 0 14 15"><g fill="none" stroke="#a678cf" stroke-width="1.3" stroke-linejoin="round"><path d="M7 1 L12.9 4.1 L12.9 10.9 L7 14 L1.1 10.9 L1.1 4.1 Z"/><path d="M1.1 4.1 L7 7.3 L12.9 4.1 M7 7.3 L7 14"/></g></svg>
<div class="cl sg" style="left:21.50px;top:204.12px">UseModel</div>
<div class="abs" style="left:0;top:223.84px;width:257.60px;height:20.31px;background:#062f4a"></div>
<svg class="abs" style="left:3.90px;top:226.34px" width="14" height="15" viewBox="0 0 14 15"><g fill="none" stroke="#a678cf" stroke-width="1.3" stroke-linejoin="round"><path d="M7 1 L12.9 4.1 L12.9 10.9 L7 14 L1.1 10.9 L1.1 4.1 Z"/><path d="M1.1 4.1 L7 7.3 L12.9 4.1 M7 7.3 L7 14"/></g></svg>
<div class="cl sg" style="left:21.50px;top:224.44px">UseMySql</div>
<div class="abs" style="right:0;top:0;width:7.6px;height:223.84px;background:#252526"></div>
<div class="abs" style="right:0;top:14px;width:7.6px;height:170px;background:rgba(121,121,121,0.12)"></div>
</div>
<div class="abs" style="left:490.20px;top:189.80px;width:258.60px;height:108.80px;background:#252526;border:0.8px solid #454545;box-shadow:0 1px 5px rgba(0,0,0,.45)">
<div class="cl dt" style="left:3.60px;top:4.60px">DbContextOptionsBuilder UseM</div>
<div class="cl dt" style="left:3.60px;top:24.91px">ySql(DbConnection connectio</div>
<div class="cl dt" style="left:3.60px;top:45.22px">n, Action&lt;MySqlDbContextOpti</div>
<div class="cl dt" style="left:3.60px;top:65.54px">onsBuilder&gt; mySqlOptionsActi</div>
<div class="cl dt" style="left:3.60px;top:85.85px">on = null) (+ 1 overload(s))</div>
<div class="abs" style="left:239.00px;top:4.80px;font-size:12.5px;line-height:12px;color:#c0c0c0;font-weight:bold">×</div>
</div>
<div class="abs" style="left:532.00px;top:0.00px;width:327.80px;height:26.20px;background:#2d2d30;box-shadow:0 1.5px 6px rgba(0,0,0,.7)">
<svg class="abs" style="left:5.4px;top:9.6px" width="6" height="8" viewBox="0 0 6 8"><path d="M0.9 0.9 L4.8 4 L0.9 7.1 Z" fill="#8a8a8a" stroke="#c5c5c5" stroke-width="0.9"/></svg>
<div class="abs" style="left:16.60px;top:2.5px;width:168.60px;height:20px;background:#3c3c3c"></div>
<div class="abs ui" style="left:21.00px;top:6.9px;font-size:10.55px;color:#d0d0d0;letter-spacing:0.2px;-webkit-text-stroke:0.2px currentColor">.alertify.ajs-in:not(.ajs...</div>
<div class="abs ui" style="left:137.00px;top:7.4px;font-size:9.2px;color:#8e8e8e;letter-spacing:0.1px">Aa</div>
<div class="abs ui" style="left:153.20px;top:7.6px;width:11.4px;height:9.6px;border:0.9px solid #8e8e8e;border-left-color:#666;border-right-color:#666;font-size:7.6px;line-height:7.8px;color:#8e8e8e;text-align:center;letter-spacing:-0.2px">Ab|</div>
<div class="abs ui" style="left:171.00px;top:4.2px;font-size:10.5px;color:#b5b5b5;font-weight:bold">.*</div>
<div class="abs ui" style="left:189.60px;top:6.9px;font-size:10.5px;color:#f08160;letter-spacing:-0.45px;-webkit-text-stroke:0.3px currentColor">No Results</div>
<svg class="abs" style="left:258.80px;top:8.7px" width="10" height="9" viewBox="0 0 10 9"><path d="M8.6 4.5 L1.4 4.5 M4.4 1.4 L1.3 4.5 L4.4 7.6" fill="none" stroke="#c8c8c8" stroke-width="1.5"/></svg>
<svg class="abs" style="left:274.60px;top:8.7px" width="10" height="9" viewBox="0 0 10 9"><path d="M1.4 4.5 L8.6 4.5 M5.6 1.4 L8.7 4.5 L5.6 7.6" fill="none" stroke="#c8c8c8" stroke-width="1.5"/></svg>
<svg class="abs" style="left:292.50px;top:8.2px" width="11" height="10" viewBox="0 0 11 10"><path d="M0.5 1.2 H10.2 M0.5 3.7 H7.6 M0.5 6.2 H10.2 M0.5 8.7 H6.4" stroke="#5c5c5c" stroke-width="1.1"/></svg>
<svg class="abs" style="left:312.40px;top:9.3px" width="8" height="8" viewBox="0 0 8 8"><path d="M0.9 0.9 L7.1 7.1 M7.1 0.9 L0.9 7.1" stroke="#d8d8d8" stroke-width="1.7"/></svg>
</div>
<div class="abs" style="left:65.60px;top:499.00px;width:651.40px;height:8px;background:rgba(121,121,121,0.4)"></div>
</div>
<div id="status" class="abs"><svg class="abs" style="left:0;top:0" width="998" height="15" viewBox="2.0 546.0 998 15">
<g fill="none" stroke="#fff" stroke-width="1"><circle cx="14.8" cy="550.6" r="1.2"/><circle cx="18.6" cy="551.6" r="1.2"/><path d="M14.8 551.8 L14.8 559.4 M18.6 552.8 C18.6 555.4 14.8 554.6 14.8 557"/></g>
<path d="M70.6 557.4 L69.4 557.4 C67.4 557.4 66.8 554.6 69 554 C69 551.2 73 550.2 74.4 552.4 C76.6 551.4 78.6 553.2 78 554.4 C80.4 554.6 80.2 557.4 78.4 557.4 L77.6 557.4" fill="none" stroke="#fff" stroke-width="1"/><path d="M74.2 559.6 L74.2 554.8 M72.2 556.6 L74.2 554.6 L76.2 556.6" fill="none" stroke="#fff" stroke-width="1.1"/>
<circle cx="94.2" cy="555.4" r="4.2" fill="#fff"/><path d="M92.4 553.6 L96 557.2 M96 553.6 L92.4 557.2" stroke="#1b6cc8" stroke-width="1.2"/>
<path d="M115.8 550.8 L120.4 559.4 L111.2 559.4 Z" fill="#fff"/><path d="M115.8 553.6 L115.8 556.6 M115.8 557.4 L115.8 558.6" stroke="#1b6cc8" stroke-width="1.1"/>
<path d="M144.6 550 C146.8 552 148.6 554.2 148.2 557 C147.9 559 146.4 560.2 144.4 560.2 C142.2 560.2 140.6 558.8 140.8 556.6 C141 554.8 142.4 554.2 142.6 552.6 C143.6 553.4 144 554.4 143.8 555.4 C145 554.2 145.2 552 144.6 550 Z" fill="#2fb344"/>
<path d="M161.8 551.6 L165.6 551.6 L166.6 552.8 L171.6 552.8 L171.6 559.4 L161.8 559.4 Z" fill="#fff"/>
<circle cx="953.8" cy="555.5" r="5.3" fill="#fff"/><circle cx="952" cy="554" r="0.95" fill="#1b6cc8"/><circle cx="955.6" cy="554" r="0.95" fill="#1b6cc8"/><path d="M950.6 556.6 C951.8 559.4 955.8 559.4 957 556.6" fill="none" stroke="#1b6cc8" stroke-width="1.1"/>
<path d="M976 550.4 C978.6 550.4 979.2 552.6 979.2 554.6 C979.2 556.6 980 557.2 981 558 L971 558 C972 557.2 972.8 556.6 972.8 554.6 C972.8 552.6 973.4 550.4 976 550.4 Z M974.8 558.6 L977.2 558.6 C977.2 560.2 974.8 560.2 974.8 558.6 Z" fill="#fff"/>
</svg>
<span style="left:21.20px;">master*</span>
<span style="left:100.60px;">0</span>
<span style="left:122.00px;">0</span>
<span style="left:171.80px;">DatingApp</span>
<span style="left:673.20px;">Ln 40, Col 22</span>
<span style="left:744.40px;">Spaces: 4</span>
<span style="left:799.60px;">UTF-8 with BOM</span>
<span style="left:885.60px;">CRLF</span>
<span style="left:921.00px;">C#</span>
<span style="left:981.40px;">1</span>
<span style="left:970.00px;top:-1.8px;font-size:7px;color:rgba(200,220,250,0.34);font-weight:bold;letter-spacing:-0.1px;-webkit-text-stroke:0">Udemy</span>
<svg class="abs" style="left:954.20px;top:-4.4px" width="16" height="14" viewBox="0 0 16 14"><path d="M1 11.6 C2.6 9.4 4 5 5 1.6 C5.4 5 5 8.6 5.8 10.6 C7 9.6 8.2 6.6 9 4.2 C9.2 6.4 9.2 9 10.4 9.8 C11.2 9.6 12 9 12.8 8.2" fill="none" stroke="rgba(190,214,250,0.6)" stroke-width="1.5" stroke-linecap="round" stroke-linejoin="round"/></svg></div>
</div>
</body></html>
